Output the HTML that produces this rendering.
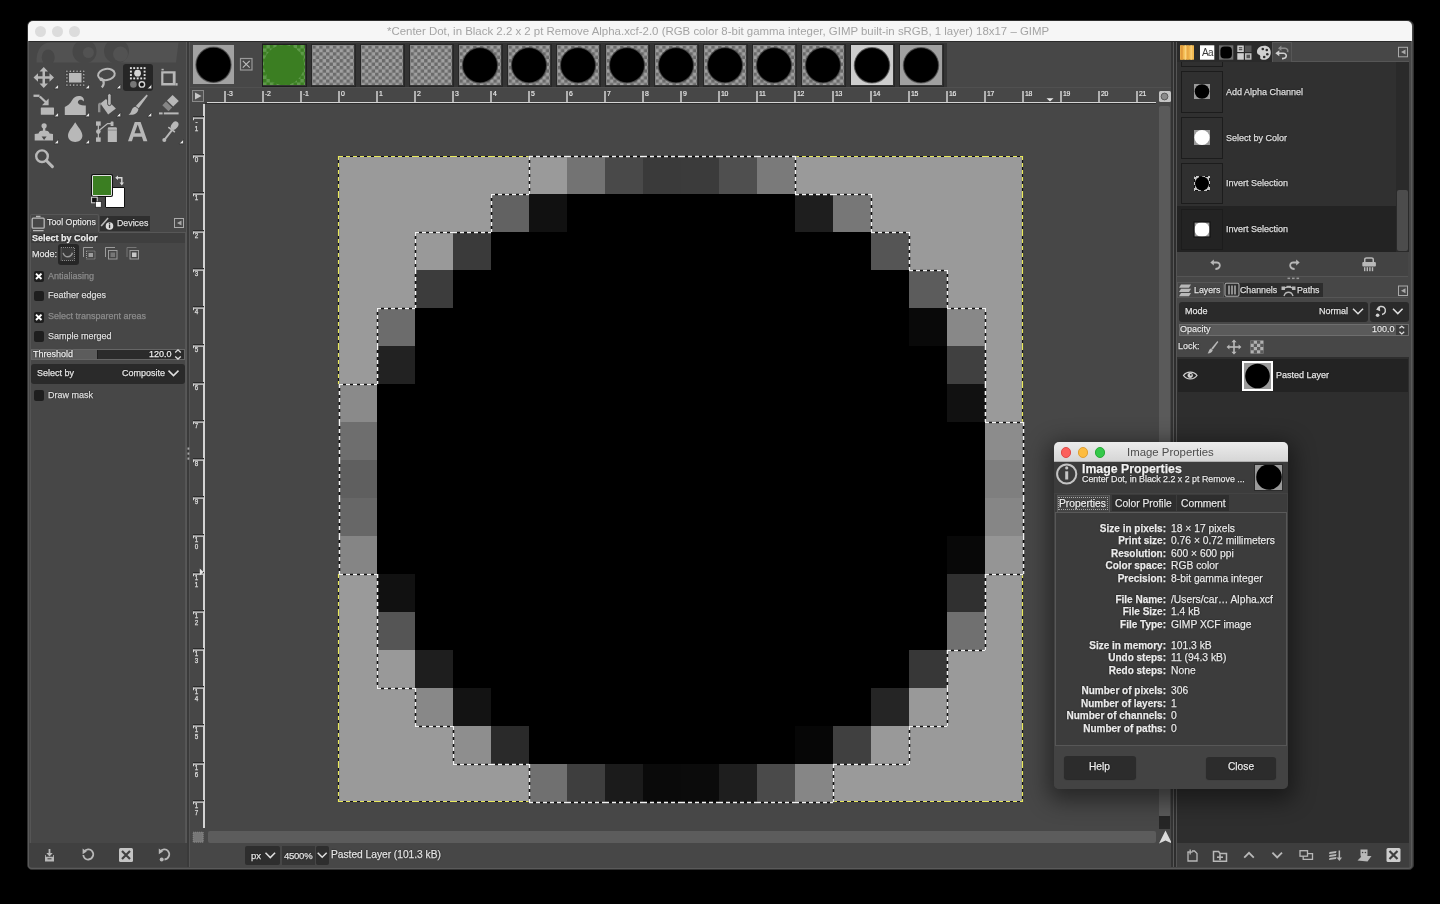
<!DOCTYPE html>
<html><head><meta charset="utf-8"><title>GIMP</title>
<style>
*{box-sizing:border-box;margin:0;padding:0}
html,body{width:1440px;height:904px;overflow:hidden;background:#000;font-family:"Liberation Sans", sans-serif;position:relative}
.a{position:absolute}
.t{position:absolute;white-space:nowrap;line-height:1;color:#e2e2e2;text-shadow:0 0 1px #000,0 0 1.5px rgba(0,0,0,.8);-webkit-text-stroke:0.25px currentColor;will-change:transform}
svg{position:absolute;overflow:visible}
</style></head><body>
<div class="a" style="left:26.5px;top:20px;width:1387px;height:849.5px;background:#474747;border-radius:6px 6px 5px 5px;border:1px solid #303030"></div>
<div class="a" style="left:28px;top:21px;width:1384px;height:20px;background:#f6f6f6;border-radius:5px 5px 0 0"></div>
<div class="a" style="left:28px;top:41px;width:1384px;height:1px;background:#2a2a2a;"></div>
<div class="a" style="left:35.1px;top:25.5px;width:11px;height:11px;background:#dcdcdc;border-radius:50%"></div>
<div class="a" style="left:52.0px;top:25.5px;width:11px;height:11px;background:#dcdcdc;border-radius:50%"></div>
<div class="a" style="left:68.9px;top:25.5px;width:11px;height:11px;background:#dcdcdc;border-radius:50%"></div>
<div class="t" style="left:386.7px;top:26px;font-size:11.45px;color:#a4a4a4;font-weight:400;text-shadow:none;-webkit-text-stroke:0">*Center Dot, in Black 2.2 x 2 pt Remove Alpha.xcf-2.0 (RGB color 8-bit gamma integer, GIMP built-in sRGB, 1 layer) 18x17 – GIMP</div>
<div class="a" style="left:28px;top:42px;width:161px;height:825px;background:#474747;"></div>
<div class="a" style="left:186px;top:42px;width:1px;height:825px;background:#575757;"></div>
<div class="a" style="left:187px;top:42px;width:2px;height:825px;background:#3a3a3a;"></div>
<div class="a" style="left:189px;top:42px;width:1px;height:825px;background:#545454;"></div>
<div class="a" style="left:28px;top:42px;width:160px;height:21px;overflow:hidden">
<svg style="left:-28px;top:-42px;" width="1" height="1" viewBox="0 0 1 1">
<path d="M36.5 62.5 C36 50 42 42.5 50 42.5 L178.5 42.5 L176 62.5 Z" fill="#525252"/>
<ellipse cx="48.2" cy="57.5" rx="6.5" ry="8" fill="#474747"/>
<path d="M52 42 C60 44 66 52 76 62.5 L36 62.5 Z" fill="none"/>
<circle cx="84.5" cy="51.5" r="12" fill="#474747"/>
<circle cx="88.4" cy="52.5" r="5.5" fill="#525252"/>
<circle cx="116.5" cy="51" r="12.5" fill="#474747"/>
<circle cx="120.5" cy="54" r="7.5" fill="#525252"/>
</svg>
</div>
<div class="a" style="left:123px;top:64px;width:30px;height:27px;background:#262626;border-radius:3px"></div>
<svg style="left:0px;top:0px;" width="1" height="1" viewBox="0 0 1 1">
<g fill="#b8b8b8">
 <!-- move -->
 <rect x="42.5" y="70" width="2.5" height="15"/><rect x="36.5" y="76.25" width="15" height="2.5"/>
 <path d="M43.75 67 L48 71.5 L39.5 71.5Z M43.75 88 L48 83.5 L39.5 83.5Z M33.5 77.5 L38 73.25 L38 81.75Z M54 77.5 L49.5 73.25 L49.5 81.75Z"/>
 <!-- rect select -->
 <rect x="69" y="73" width="12.5" height="9.5"/>
</g>
<g fill="#b8b8b8" stroke="#2a2a2a" stroke-width="0.4"><rect x="66.0" y="70.2" width="1.9" height="1.9"/><rect x="66.0" y="84.1" width="1.9" height="1.9"/><rect x="69.3" y="70.2" width="1.9" height="1.9"/><rect x="69.3" y="84.1" width="1.9" height="1.9"/><rect x="72.7" y="70.2" width="1.9" height="1.9"/><rect x="72.7" y="84.1" width="1.9" height="1.9"/><rect x="76.1" y="70.2" width="1.9" height="1.9"/><rect x="76.1" y="84.1" width="1.9" height="1.9"/><rect x="79.4" y="70.2" width="1.9" height="1.9"/><rect x="79.4" y="84.1" width="1.9" height="1.9"/><rect x="82.9" y="70.2" width="1.9" height="1.9"/><rect x="82.9" y="84.1" width="1.9" height="1.9"/><rect x="66.0" y="73.6" width="1.9" height="1.9"/><rect x="82.9" y="73.6" width="1.9" height="1.9"/><rect x="66.0" y="77.0" width="1.9" height="1.9"/><rect x="82.9" y="77.0" width="1.9" height="1.9"/><rect x="66.0" y="80.4" width="1.9" height="1.9"/><rect x="82.9" y="80.4" width="1.9" height="1.9"/></g>
<g fill="#b8b8b8">
 <!-- crop -->
 <path d="M161.2 71.2 H175.6 V85.6 H161.2 Z M163.4 73.4 V83.1 H172.8 V73.4 Z" fill-rule="evenodd"/>
 <rect x="161.5" y="68.8" width="2.2" height="1.6"/><rect x="175.6" y="83.1" width="2" height="2.5"/>
 <!-- fuzzy select -->
</g>
<g fill="#e0e0e0"><rect x="129.95000000000002" y="67.14999999999999" width="1.9" height="1.9"/><rect x="129.95000000000002" y="77.45" width="1.9" height="1.9"/><rect x="133.25" y="67.14999999999999" width="1.9" height="1.9"/><rect x="133.25" y="77.45" width="1.9" height="1.9"/><rect x="136.75" y="67.14999999999999" width="1.9" height="1.9"/><rect x="136.75" y="77.45" width="1.9" height="1.9"/><rect x="140.25" y="67.14999999999999" width="1.9" height="1.9"/><rect x="140.25" y="77.45" width="1.9" height="1.9"/><rect x="143.65" y="67.14999999999999" width="1.9" height="1.9"/><rect x="143.65" y="77.45" width="1.9" height="1.9"/><rect x="129.95000000000002" y="70.64999999999999" width="1.9" height="1.9"/><rect x="129.95000000000002" y="74.05" width="1.9" height="1.9"/><rect x="143.65" y="70.64999999999999" width="1.9" height="1.9"/><rect x="143.65" y="74.05" width="1.9" height="1.9"/></g>
<circle cx="137.6" cy="73.2" r="3.4" fill="#d4d4d4"/>
<circle cx="133.4" cy="84.4" r="3.3" fill="#777"/>
<circle cx="141.9" cy="84.4" r="2.7" fill="#111" stroke="#d4d4d4" stroke-width="1.4"/>
<!-- lasso -->
<g fill="none" stroke="#b8b8b8" stroke-width="2">
 <ellipse cx="106.4" cy="74.5" rx="8.4" ry="5.6" transform="rotate(-8 106.4 74.5)"/>
 <path d="M100.8 78.8 C 102.5 79.5 104 81.5 103.6 84 C 103.3 85.6 102.6 86.6 101.8 87.4" stroke-width="2.3"/>
</g>
<circle cx="101.3" cy="79.4" r="1.8" fill="#b8b8b8"/>
<path d="M58.5 88.8 L58.5 84.3 L54.0 88.8 Z" fill="#e6e6e6" stroke="#1e1e1e" stroke-width="0.6"/><path d="M89.5 88.8 L89.5 84.3 L85.0 88.8 Z" fill="#e6e6e6" stroke="#1e1e1e" stroke-width="0.6"/><path d="M120.7 88.8 L120.7 84.3 L116.2 88.8 Z" fill="#e6e6e6" stroke="#1e1e1e" stroke-width="0.6"/><path d="M151.7 88.8 L151.7 84.3 L147.2 88.8 Z" fill="#e6e6e6" stroke="#1e1e1e" stroke-width="0.6"/>
<g fill="#b8b8b8">
 <!-- transform: dash + arrow + box -->
 <rect x="33.5" y="94.6" width="6" height="2.3"/>
 <path d="M39.8 96.5 L46.2 102.5" stroke="#b8b8b8" stroke-width="2.3"/>
 <path d="M48.6 105.2 L48.6 98.5 L42 105.2 Z"/>
 <rect x="40.8" y="107.4" width="13.2" height="7.4" rx="0.6"/>
 <!-- warp wave -->
 <path d="M64.8 115 L64.8 107 C 67 106 70 104 72.2 100 C 74 96.8 77 95.5 80 96 C 83 96.5 84.5 99 83.8 101.5 C 82.5 99.8 80.6 99.3 79 100.2 C 77.3 101.2 77.6 103.5 79.5 104.5 C 81.5 105.5 84 105.8 85.8 105.5 L85.8 115 Z"/>
 <!-- bucket -->
 <path d="M106 98.9 L115.9 108.4 L108.2 114.4 L100.4 103.6 Z"/>
 <path d="M98 112.3 L98 105 C 98 103.5 99 102.6 100.5 102.6 L 101.6 104.4 C 100.8 104.6 100.4 105.2 100.4 106 L100.4 112.3 Z" fill="#8e8e8e"/>
 <rect x="107.6" y="93.6" width="3.6" height="12" rx="1.8" stroke="#2e2e2e" stroke-width="0.8"/>
 <!-- paintbrush -->
 <path d="M146.7 94.6 L147.8 95.8 L138.6 108.2 L135.8 106 Z"/>
 <path d="M135.6 106.8 L138.4 109 C 138 112.6 135 114.8 131 114.8 C 130 114.8 129 114.6 128.6 114.4 C 130.4 113.6 131 112 131.6 110.2 C 132.4 108 133.8 107 135.6 106.8 Z"/>
 <!-- eraser -->
 <path d="M172.6 95 L178.8 101 L173.2 106.6 L167 100.6 Z"/>
 <path d="M166 101.6 L172.2 107.6 L168.5 111.3 L162.3 105.3 Z" fill="#858585"/>
 <rect x="159" y="112.4" width="3.6" height="2"/><rect x="163.8" y="112.4" width="14.8" height="2"/>
</g>
<path d="M58.5 116.8 L58.5 112.3 L54.0 116.8 Z" fill="#e6e6e6" stroke="#1e1e1e" stroke-width="0.6"/><path d="M89.5 116.8 L89.5 112.3 L85.0 116.8 Z" fill="#e6e6e6" stroke="#1e1e1e" stroke-width="0.6"/><path d="M120.7 116.8 L120.7 112.3 L116.2 116.8 Z" fill="#e6e6e6" stroke="#1e1e1e" stroke-width="0.6"/><path d="M151.7 116.8 L151.7 112.3 L147.2 116.8 Z" fill="#e6e6e6" stroke="#1e1e1e" stroke-width="0.6"/>
<g fill="#b8b8b8">
 <!-- clone stamp -->
 <circle cx="44.1" cy="125.8" r="2.6"/>
 <rect x="42.9" y="127" width="2.4" height="4"/>
 <path d="M38.5 133.5 C 39 131 41 130.4 44 130.4 C 47 130.4 49 131 49.6 133.5 L53 134 L53 140.4 L34.7 140.4 L34.7 134 Z"/>
 <path d="M41.6 136.4 L46.6 136.4 L44.1 140 Z" fill="#474747"/>
 <!-- drop -->
 <path d="M75.2 122.2 C 77.5 126.5 82.4 131 82.4 135.6 C 82.4 139.5 79.2 142 75.2 142 C 71.2 142 68 139.5 68 135.6 C 68 131 73 126.5 75.2 122.2 Z"/>
 <!-- paths + bottle -->
 <rect x="96" y="121.4" width="4.7" height="4.3"/><rect x="96" y="137.4" width="4.7" height="4.4"/>
 <circle cx="98.35" cy="131.6" r="2.3"/>
 <rect x="97.75" y="125" width="1.2" height="13"/>
 <path d="M99.6 130 L107.6 123.6 L111.5 123.6" fill="none" stroke="#b8b8b8" stroke-width="1.3"/>
 <rect x="110.6" y="121.4" width="2.9" height="4.6" rx="0.6"/>
 <path d="M107.8 128.4 C 107.8 127.6 108.4 127.2 109.2 127.2 H115.5 C 116.3 127.2 116.9 127.6 116.9 128.4 V142 H107.8 Z"/>
 <rect x="107.8" y="129.6" width="9.1" height="1" fill="#8a8a8a"/>
 <!-- A -->
 <path d="M134.8 122 L140.6 122 L147.4 141.3 L143.4 141.3 L141.9 136.8 L133.4 136.8 L131.9 141.3 L128 141.3 Z M134.5 133.2 L140.8 133.2 L137.7 124.6 Z" fill-rule="evenodd"/>
 <!-- colour picker -->
 <ellipse cx="174.6" cy="125.6" rx="3.2" ry="4.6" transform="rotate(38 174.6 125.6)"/>
 <path d="M168.9 127.6 L174.3 131.6" stroke="#b8b8b8" stroke-width="1.8" stroke-linecap="round"/>
 <path d="M172.4 129.6 L164.8 139.4" stroke="#b8b8b8" stroke-width="1.9"/>
 <circle cx="164.3" cy="140" r="2"/>
</g>
<path d="M58.5 143.8 L58.5 139.3 L54.0 143.8 Z" fill="#e6e6e6" stroke="#1e1e1e" stroke-width="0.6"/><path d="M89.5 143.8 L89.5 139.3 L85.0 143.8 Z" fill="#e6e6e6" stroke="#1e1e1e" stroke-width="0.6"/><path d="M183.5 143.8 L183.5 139.3 L179.0 143.8 Z" fill="#e6e6e6" stroke="#1e1e1e" stroke-width="0.6"/>
<g fill="none" stroke="#b8b8b8" stroke-width="2.4">
 <circle cx="42" cy="156.2" r="5.8"/>
 <path d="M46.3 160.5 L52.4 166.6" stroke-width="3" stroke-linecap="round"/>
</g>
</svg>
<div class="a" style="left:104.5px;top:187px;width:20px;height:21px;background:#ffffff;border:1px solid #111;border-radius:1px"></div>
<div class="a" style="left:91.5px;top:175px;width:20px;height:21px;background:#3b7e22;border:1.5px solid #e0e0e0;box-shadow:0 0 0 1px #111;border-radius:1px"></div>
<svg style="left:0px;top:0px;" width="1" height="1" viewBox="0 0 1 1">
<g fill="none" stroke="#dadada" stroke-width="1.4">
 <path d="M117 177.8 L121.8 177.8 L121.8 183"/>
</g>
<path d="M115.2 177.8 L118 175.6 L118 180 Z M121.8 185.6 L119.6 182.6 L124 182.6 Z" fill="#dadada"/>
<rect x="91.6" y="197.2" width="5.6" height="5.6" fill="#111" stroke="#ddd" stroke-width="1"/>
<rect x="95.6" y="201.6" width="5.6" height="5.6" fill="#fff" stroke="#111" stroke-width="0.6"/>
</svg>
<div class="a" style="left:30px;top:214px;width:69px;height:18px;background:#474747;border:1px solid #575757;border-bottom:none;border-radius:2px 2px 0 0"></div>
<div class="a" style="left:99.5px;top:216px;width:50px;height:15px;background:#2f2f2f;"></div>
<div class="a" style="left:99px;top:231.5px;width:87px;height:1px;background:#575757;"></div>
<svg style="left:0px;top:0px;" width="1" height="1" viewBox="0 0 1 1">
<g fill="none" stroke="#b8b8b8" stroke-width="1.3">
 <rect x="32.2" y="218.2" width="12" height="10" rx="1"/>
 <path d="M33 230.6 L43.6 230.6 M36 216.5 L40.5 216.5"/>
</g>
<path d="M100.5 225.5 L107.5 217.5 L108.6 218.4 L101.8 226.4 Z" fill="#b8b8b8"/>
<circle cx="109.5" cy="226" r="3.8" fill="#dcdcdc"/>
<rect x="108.9" y="224.5" width="1.3" height="3.6" fill="#2f2f2f"/><rect x="108.9" y="222.8" width="1.3" height="1" fill="#2f2f2f"/>
<rect x="174.5" y="218.5" width="9" height="9" fill="none" stroke="#aaa" stroke-width="1"/>
<path d="M181.5 220.5 L177 223 L181.5 225.5 Z" fill="#aaa"/>
</svg>
<div class="t" style="left:46.5px;top:218px;font-size:8.8px;color:#e8e8e8;font-weight:400;">Tool Options</div>
<div class="t" style="left:116.5px;top:218.5px;font-size:8.8px;color:#e0e0e0;font-weight:400;">Devices</div>
<div class="a" style="left:30px;top:233px;width:156px;height:610px;background:#474747;border-left:1px solid #555;border-right:1px solid #555"></div>
<div class="a" style="left:31px;top:233px;width:154px;height:10px;background:#3f3f3f;"></div>
<div class="t" style="left:31.5px;top:233.8px;font-size:9px;color:#f0f0f0;font-weight:700;">Select by Color</div>
<div class="t" style="left:31.5px;top:249.5px;font-size:9px;color:#e8e8e8;font-weight:400;">Mode:</div>
<div class="a" style="left:58px;top:244px;width:20.5px;height:20.5px;background:#262626;border-radius:3px"></div>
<svg style="left:0px;top:0px;" width="1" height="1" viewBox="0 0 1 1">
<rect x="61" y="247.5" width="13.5" height="13" fill="#3a3a3a" stroke="#8a8a8a" stroke-width="1" stroke-dasharray="1 1"/>
<path d="M63.2 252.8 C 64.5 258 71 258 72.4 252.8" fill="none" stroke="#9a9a9a" stroke-width="1.4"/>
<g fill="none" stroke="#9c9c9c" stroke-width="1">
 <path d="M83.5 257 L83.5 247.5 L93 247.5"/>
 <rect x="86.5" y="251" width="8.5" height="8" stroke-dasharray="1 1"/>
 <path d="M105.5 257 L105.5 247.5 L115 247.5"/>
 <rect x="108.5" y="250.5" width="8.5" height="8.5"/>
 <path d="M127 257 L127 247.5 L136.5 247.5" stroke="#777"/>
 <rect x="130" y="250.5" width="8.5" height="8.5"/>
</g>
<rect x="88.5" y="253" width="4.5" height="4" fill="#9c9c9c"/>
<rect x="110.5" y="252.5" width="4.5" height="4.5" fill="#777"/>
<rect x="132" y="252.5" width="4.5" height="4.5" fill="#c8c8c8"/>
</svg>
<div class="a" style="left:33.5px;top:271px;width:10.5px;height:10.5px;background:#1e1e1e;border-radius:2px"></div>
<svg style="left:0px;top:0px;" width="1" height="1" viewBox="0 0 1 1"><path d="M36 273.6 L41.5 279 M41.5 273.6 L36 279" stroke="#fff" stroke-width="2"/></svg>
<div class="t" style="left:48px;top:271.5px;font-size:9px;color:#8c8c8c;font-weight:400;text-shadow:none">Antialiasing</div>
<div class="a" style="left:33.5px;top:290.5px;width:10.5px;height:10.5px;background:#1e1e1e;border-radius:2px"></div>
<div class="t" style="left:48px;top:291px;font-size:9px;color:#e0e0e0;font-weight:400;">Feather edges</div>
<div class="a" style="left:33.5px;top:312px;width:10.5px;height:10.5px;background:#1e1e1e;border-radius:2px"></div>
<svg style="left:0px;top:0px;" width="1" height="1" viewBox="0 0 1 1"><path d="M36 314.6 L41.5 320 M41.5 314.6 L36 320" stroke="#fff" stroke-width="2"/></svg>
<div class="t" style="left:48px;top:312px;font-size:9px;color:#8c8c8c;font-weight:400;text-shadow:none">Select transparent areas</div>
<div class="a" style="left:33.5px;top:331.3px;width:10.5px;height:10.5px;background:#1e1e1e;border-radius:2px"></div>
<div class="t" style="left:48px;top:331.5px;font-size:9px;color:#e0e0e0;font-weight:400;">Sample merged</div>
<div class="a" style="left:31px;top:348.5px;width:154px;height:11.5px;background:#2b2b2b;border:1px solid #666"></div>
<div class="a" style="left:32px;top:349.5px;width:65.5px;height:9.5px;background:#5c5c5c;"></div>
<div class="a" style="left:97.3px;top:349.5px;width:1px;height:9.5px;background:#1e1e1e;"></div>
<div class="t" style="left:32.5px;top:349.8px;font-size:9px;color:#f0f0f0;font-weight:400;">Threshold</div>
<div class="t" style="left:148.5px;top:349.8px;font-size:9px;color:#f0f0f0;font-weight:400;">120.0</div>
<svg style="left:0px;top:0px;" width="1" height="1" viewBox="0 0 1 1"><path d="M175.2 352.4 L178 349.8 L180.8 352.4 M175.2 356.4 L178 359 L180.8 356.4" fill="none" stroke="#ddd" stroke-width="1.3"/></svg>
<div class="a" style="left:31px;top:363.5px;width:154px;height:20px;background:#2a2a2a;border-radius:3px"></div>
<div class="t" style="left:37px;top:368.5px;font-size:9px;color:#e6e6e6;font-weight:400;">Select by</div>
<div class="t" style="left:121.5px;top:368.5px;font-size:9px;color:#e6e6e6;font-weight:400;">Composite</div>
<svg style="left:0px;top:0px;" width="1" height="1" viewBox="0 0 1 1"><path d="M168.5 370.6 L173.5 375.6 L178.5 370.6" fill="none" stroke="#e0e0e0" stroke-width="1.5"/></svg>
<div class="a" style="left:33.5px;top:390.2px;width:10.5px;height:10.5px;background:#1e1e1e;border-radius:2px"></div>
<div class="t" style="left:48px;top:390.5px;font-size:9px;color:#e0e0e0;font-weight:400;">Draw mask</div>
<div class="a" style="left:29px;top:843px;width:158px;height:24px;background:#404040;"></div>
<svg style="left:0px;top:0px;" width="1" height="1" viewBox="0 0 1 1">
<g fill="#b8b8b8">
 <rect x="48.6" y="849" width="1.8" height="5"/><path d="M46.3 853 L52.7 853 L49.5 856.5 Z"/>
 <path d="M45 855 L45.8 855 L45.8 856.8 L53.2 856.8 L53.2 855 L54 855 L54 861.6 L45 861.6 Z"/>
</g>
<rect x="47.5" y="858.3" width="4" height="1" fill="#404040"/>
<g fill="none" stroke="#b8b8b8" stroke-width="1.8">
 <path d="M84.5 851.5 C 86 849 90 848.5 92 851 C 94.5 854 93 859 88.5 859.5 C 85.5 859.8 83.5 857.5 83.3 855"/>
 <path d="M160.6 851.5 C 162 849 166 848.5 168 851 C 170.5 854 169 859 164.5 859.5"/>
</g>
<path d="M82.6 848.6 L86.8 851.6 L82.6 854.2 Z" fill="#b8b8b8"/>
<path d="M158.8 848.6 L163 851.6 L158.8 854.2 Z" fill="#b8b8b8"/>
<circle cx="161.7" cy="859.6" r="2" fill="#b8b8b8"/>
<rect x="119" y="848" width="14" height="14" rx="1.5" fill="#c4c4c4"/>
<path d="M122 851 L130 859 M130 851 L122 859" stroke="#404040" stroke-width="2.2"/>
</svg>
<div class="a" style="left:190px;top:42px;width:986px;height:825px;background:#474747;"></div>
<div class="a" style="left:262px;top:43px;width:685px;height:44px;background:#343434;"></div>
<svg width="0" height="0" style="position:absolute"><defs><pattern id="chk" width="6.8" height="6.8" patternUnits="userSpaceOnUse" x="0.5" y="0.5"><rect width="6.8" height="6.8" fill="#a0a0a0"/><rect width="3.4" height="3.4" fill="#6a6a6a"/><rect x="3.4" y="3.4" width="3.4" height="3.4" fill="#6a6a6a"/></pattern><pattern id="chkg" width="6.8" height="6.8" patternUnits="userSpaceOnUse"><rect width="6.8" height="6.8" fill="#5f9a4b"/><rect width="3.4" height="3.4" fill="#3b7e22"/><rect x="3.4" y="3.4" width="3.4" height="3.4" fill="#3b7e22"/></pattern></defs></svg>
<svg style="left:193px;top:45px" width="41" height="39"><rect width="41" height="39" fill="#a2a2a2"/><circle cx="20.5" cy="19.8" r="17.6" fill="#000" stroke="#4a4a4a" stroke-width="1.3" stroke-opacity="0.7"/></svg>
<svg style="left:0px;top:0px;" width="1" height="1" viewBox="0 0 1 1"><rect x="240.5" y="58.5" width="11.5" height="11.5" fill="none" stroke="#9a9a9a" stroke-width="1.2"/><path d="M242.8 60.8 L249.7 67.7 M249.7 60.8 L242.8 67.7" stroke="#bcbcbc" stroke-width="1.2"/></svg>
<svg style="left:263px;top:45px" width="42" height="40"><rect width="42" height="40" fill="url(#chkg)"/><circle cx="21" cy="20" r="20" fill="#3b7e22"/></svg>
<div class="a" style="left:261.5px;top:43.5px;width:45px;height:43px;background:transparent;border:1.5px solid #1e1e1e"></div>
<svg style="left:312px;top:45px" width="42" height="40"><rect width="42" height="40" fill="url(#chk)"/></svg>
<div class="a" style="left:310.5px;top:43.5px;width:45px;height:43px;background:transparent;border:1.5px solid #262626"></div>
<svg style="left:361px;top:45px" width="42" height="40"><rect width="42" height="40" fill="url(#chk)"/></svg>
<div class="a" style="left:359.5px;top:43.5px;width:45px;height:43px;background:transparent;border:1.5px solid #262626"></div>
<svg style="left:410px;top:45px" width="42" height="40"><rect width="42" height="40" fill="url(#chk)"/></svg>
<div class="a" style="left:408.5px;top:43.5px;width:45px;height:43px;background:transparent;border:1.5px solid #262626"></div>
<svg style="left:459px;top:45px" width="42" height="40"><rect width="42" height="40" fill="url(#chk)"/><circle cx="21" cy="20.3" r="17.6" fill="#000" stroke="#4a4a4a" stroke-width="1.3" stroke-opacity="0.7"/></svg>
<div class="a" style="left:457.5px;top:43.5px;width:45px;height:43px;background:transparent;border:1.5px solid #262626"></div>
<svg style="left:508px;top:45px" width="42" height="40"><rect width="42" height="40" fill="url(#chk)"/><circle cx="21" cy="20.3" r="17.6" fill="#000" stroke="#4a4a4a" stroke-width="1.3" stroke-opacity="0.7"/></svg>
<div class="a" style="left:506.5px;top:43.5px;width:45px;height:43px;background:transparent;border:1.5px solid #262626"></div>
<svg style="left:557px;top:45px" width="42" height="40"><rect width="42" height="40" fill="url(#chk)"/><circle cx="21" cy="20.3" r="17.6" fill="#000" stroke="#4a4a4a" stroke-width="1.3" stroke-opacity="0.7"/></svg>
<div class="a" style="left:555.5px;top:43.5px;width:45px;height:43px;background:transparent;border:1.5px solid #262626"></div>
<svg style="left:606px;top:45px" width="42" height="40"><rect width="42" height="40" fill="url(#chk)"/><circle cx="21" cy="20.3" r="17.6" fill="#000" stroke="#4a4a4a" stroke-width="1.3" stroke-opacity="0.7"/></svg>
<div class="a" style="left:604.5px;top:43.5px;width:45px;height:43px;background:transparent;border:1.5px solid #262626"></div>
<svg style="left:655px;top:45px" width="42" height="40"><rect width="42" height="40" fill="url(#chk)"/><circle cx="21" cy="20.3" r="17.6" fill="#000" stroke="#4a4a4a" stroke-width="1.3" stroke-opacity="0.7"/></svg>
<div class="a" style="left:653.5px;top:43.5px;width:45px;height:43px;background:transparent;border:1.5px solid #262626"></div>
<svg style="left:704px;top:45px" width="42" height="40"><rect width="42" height="40" fill="url(#chk)"/><circle cx="21" cy="20.3" r="17.6" fill="#000" stroke="#4a4a4a" stroke-width="1.3" stroke-opacity="0.7"/></svg>
<div class="a" style="left:702.5px;top:43.5px;width:45px;height:43px;background:transparent;border:1.5px solid #262626"></div>
<svg style="left:753px;top:45px" width="42" height="40"><rect width="42" height="40" fill="url(#chk)"/><circle cx="21" cy="20.3" r="17.6" fill="#000" stroke="#4a4a4a" stroke-width="1.3" stroke-opacity="0.7"/></svg>
<div class="a" style="left:751.5px;top:43.5px;width:45px;height:43px;background:transparent;border:1.5px solid #262626"></div>
<svg style="left:802px;top:45px" width="42" height="40"><rect width="42" height="40" fill="url(#chk)"/><circle cx="21" cy="20.3" r="17.6" fill="#000" stroke="#4a4a4a" stroke-width="1.3" stroke-opacity="0.7"/></svg>
<div class="a" style="left:800.5px;top:43.5px;width:45px;height:43px;background:transparent;border:1.5px solid #262626"></div>
<svg style="left:851px;top:45px" width="42" height="40"><rect width="42" height="40" fill="#cdcdcd"/><circle cx="21" cy="20.3" r="17.6" fill="#000" stroke="#4a4a4a" stroke-width="1.3" stroke-opacity="0.7"/></svg>
<div class="a" style="left:849.5px;top:43.5px;width:45px;height:43px;background:transparent;border:1.5px solid #262626"></div>
<svg style="left:900px;top:45px" width="42" height="40"><rect width="42" height="40" fill="#a0a0a0"/><circle cx="21" cy="20.3" r="17.6" fill="#000" stroke="#4a4a4a" stroke-width="1.3" stroke-opacity="0.7"/></svg>
<div class="a" style="left:898.5px;top:43.5px;width:45px;height:43px;background:transparent;border:1.5px solid #262626"></div>
<div class="a" style="left:190px;top:87px;width:986px;height:1px;background:#505050;"></div>
<div class="a" style="left:207px;top:101.5px;width:949px;height:1.5px;background:#d4d4d4;"></div>
<div class="a" style="left:205px;top:103px;width:951px;height:1px;background:#2c2c2c;"></div>
<svg style="left:0px;top:0px;" width="1" height="1" viewBox="0 0 1 1"><rect x="224.25" y="91" width="1.5" height="11" fill="#d4d4d4"/><rect x="262.25" y="91" width="1.5" height="11" fill="#d4d4d4"/><rect x="300.25" y="91" width="1.5" height="11" fill="#d4d4d4"/><rect x="338.25" y="91" width="1.5" height="11" fill="#d4d4d4"/><rect x="376.25" y="91" width="1.5" height="11" fill="#d4d4d4"/><rect x="414.25" y="91" width="1.5" height="11" fill="#d4d4d4"/><rect x="452.25" y="91" width="1.5" height="11" fill="#d4d4d4"/><rect x="490.25" y="91" width="1.5" height="11" fill="#d4d4d4"/><rect x="528.25" y="91" width="1.5" height="11" fill="#d4d4d4"/><rect x="566.25" y="91" width="1.5" height="11" fill="#d4d4d4"/><rect x="604.25" y="91" width="1.5" height="11" fill="#d4d4d4"/><rect x="642.25" y="91" width="1.5" height="11" fill="#d4d4d4"/><rect x="680.25" y="91" width="1.5" height="11" fill="#d4d4d4"/><rect x="718.25" y="91" width="1.5" height="11" fill="#d4d4d4"/><rect x="756.25" y="91" width="1.5" height="11" fill="#d4d4d4"/><rect x="794.25" y="91" width="1.5" height="11" fill="#d4d4d4"/><rect x="832.25" y="91" width="1.5" height="11" fill="#d4d4d4"/><rect x="870.25" y="91" width="1.5" height="11" fill="#d4d4d4"/><rect x="908.25" y="91" width="1.5" height="11" fill="#d4d4d4"/><rect x="946.25" y="91" width="1.5" height="11" fill="#d4d4d4"/><rect x="984.25" y="91" width="1.5" height="11" fill="#d4d4d4"/><rect x="1022.25" y="91" width="1.5" height="11" fill="#d4d4d4"/><rect x="1060.25" y="91" width="1.5" height="11" fill="#d4d4d4"/><rect x="1098.25" y="91" width="1.5" height="11" fill="#d4d4d4"/><rect x="1136.25" y="91" width="1.5" height="11" fill="#d4d4d4"/></svg>
<div class="t" style="left:226.8px;top:90.6px;font-size:6.9px;color:#ececec;font-weight:400;text-shadow:none;letter-spacing:-0.3px;-webkit-text-stroke:0.15px #ececec">-3</div>
<div class="t" style="left:264.8px;top:90.6px;font-size:6.9px;color:#ececec;font-weight:400;text-shadow:none;letter-spacing:-0.3px;-webkit-text-stroke:0.15px #ececec">-2</div>
<div class="t" style="left:302.8px;top:90.6px;font-size:6.9px;color:#ececec;font-weight:400;text-shadow:none;letter-spacing:-0.3px;-webkit-text-stroke:0.15px #ececec">-1</div>
<div class="t" style="left:340.8px;top:90.6px;font-size:6.9px;color:#ececec;font-weight:400;text-shadow:none;letter-spacing:-0.3px;-webkit-text-stroke:0.15px #ececec">0</div>
<div class="t" style="left:378.8px;top:90.6px;font-size:6.9px;color:#ececec;font-weight:400;text-shadow:none;letter-spacing:-0.3px;-webkit-text-stroke:0.15px #ececec">1</div>
<div class="t" style="left:416.8px;top:90.6px;font-size:6.9px;color:#ececec;font-weight:400;text-shadow:none;letter-spacing:-0.3px;-webkit-text-stroke:0.15px #ececec">2</div>
<div class="t" style="left:454.8px;top:90.6px;font-size:6.9px;color:#ececec;font-weight:400;text-shadow:none;letter-spacing:-0.3px;-webkit-text-stroke:0.15px #ececec">3</div>
<div class="t" style="left:492.8px;top:90.6px;font-size:6.9px;color:#ececec;font-weight:400;text-shadow:none;letter-spacing:-0.3px;-webkit-text-stroke:0.15px #ececec">4</div>
<div class="t" style="left:530.8px;top:90.6px;font-size:6.9px;color:#ececec;font-weight:400;text-shadow:none;letter-spacing:-0.3px;-webkit-text-stroke:0.15px #ececec">5</div>
<div class="t" style="left:568.8px;top:90.6px;font-size:6.9px;color:#ececec;font-weight:400;text-shadow:none;letter-spacing:-0.3px;-webkit-text-stroke:0.15px #ececec">6</div>
<div class="t" style="left:606.8px;top:90.6px;font-size:6.9px;color:#ececec;font-weight:400;text-shadow:none;letter-spacing:-0.3px;-webkit-text-stroke:0.15px #ececec">7</div>
<div class="t" style="left:644.8px;top:90.6px;font-size:6.9px;color:#ececec;font-weight:400;text-shadow:none;letter-spacing:-0.3px;-webkit-text-stroke:0.15px #ececec">8</div>
<div class="t" style="left:682.8px;top:90.6px;font-size:6.9px;color:#ececec;font-weight:400;text-shadow:none;letter-spacing:-0.3px;-webkit-text-stroke:0.15px #ececec">9</div>
<div class="t" style="left:720.8px;top:90.6px;font-size:6.9px;color:#ececec;font-weight:400;text-shadow:none;letter-spacing:-0.3px;-webkit-text-stroke:0.15px #ececec">10</div>
<div class="t" style="left:758.8px;top:90.6px;font-size:6.9px;color:#ececec;font-weight:400;text-shadow:none;letter-spacing:-0.3px;-webkit-text-stroke:0.15px #ececec">11</div>
<div class="t" style="left:796.8px;top:90.6px;font-size:6.9px;color:#ececec;font-weight:400;text-shadow:none;letter-spacing:-0.3px;-webkit-text-stroke:0.15px #ececec">12</div>
<div class="t" style="left:834.8px;top:90.6px;font-size:6.9px;color:#ececec;font-weight:400;text-shadow:none;letter-spacing:-0.3px;-webkit-text-stroke:0.15px #ececec">13</div>
<div class="t" style="left:872.8px;top:90.6px;font-size:6.9px;color:#ececec;font-weight:400;text-shadow:none;letter-spacing:-0.3px;-webkit-text-stroke:0.15px #ececec">14</div>
<div class="t" style="left:910.8px;top:90.6px;font-size:6.9px;color:#ececec;font-weight:400;text-shadow:none;letter-spacing:-0.3px;-webkit-text-stroke:0.15px #ececec">15</div>
<div class="t" style="left:948.8px;top:90.6px;font-size:6.9px;color:#ececec;font-weight:400;text-shadow:none;letter-spacing:-0.3px;-webkit-text-stroke:0.15px #ececec">16</div>
<div class="t" style="left:986.8px;top:90.6px;font-size:6.9px;color:#ececec;font-weight:400;text-shadow:none;letter-spacing:-0.3px;-webkit-text-stroke:0.15px #ececec">17</div>
<div class="t" style="left:1024.8px;top:90.6px;font-size:6.9px;color:#ececec;font-weight:400;text-shadow:none;letter-spacing:-0.3px;-webkit-text-stroke:0.15px #ececec">18</div>
<div class="t" style="left:1062.8px;top:90.6px;font-size:6.9px;color:#ececec;font-weight:400;text-shadow:none;letter-spacing:-0.3px;-webkit-text-stroke:0.15px #ececec">19</div>
<div class="t" style="left:1100.8px;top:90.6px;font-size:6.9px;color:#ececec;font-weight:400;text-shadow:none;letter-spacing:-0.3px;-webkit-text-stroke:0.15px #ececec">20</div>
<div class="t" style="left:1138.8px;top:90.6px;font-size:6.9px;color:#ececec;font-weight:400;text-shadow:none;letter-spacing:-0.3px;-webkit-text-stroke:0.15px #ececec">21</div>
<svg style="left:0px;top:0px;" width="1" height="1" viewBox="0 0 1 1"><path d="M1046.5 98.2 L1053.5 98.2 L1050 101.6 Z" fill="#e8e8e8"/></svg>
<svg style="left:0px;top:0px;" width="1" height="1" viewBox="0 0 1 1"><rect x="192.5" y="90.5" width="11" height="11" fill="#525252" stroke="#8a8a8a" stroke-width="1"/><path d="M195 92.5 L201.5 96 L195 99.5 Z" fill="#c8c8c8"/></svg>
<div class="a" style="left:203px;top:104px;width:1.5px;height:724px;background:#d4d4d4;"></div>
<svg style="left:0px;top:0px;" width="1" height="1" viewBox="0 0 1 1"><rect x="193" y="117.25" width="11" height="1.5" fill="#d4d4d4"/><rect x="193" y="117.25" width="1" height="3" fill="#d4d4d4"/><rect x="193" y="116" width="11" height="1.25" fill="#2a2a2a"/><rect x="193" y="155.25" width="11" height="1.5" fill="#d4d4d4"/><rect x="193" y="155.25" width="1" height="3" fill="#d4d4d4"/><rect x="193" y="154" width="11" height="1.25" fill="#2a2a2a"/><rect x="193" y="193.25" width="11" height="1.5" fill="#d4d4d4"/><rect x="193" y="193.25" width="1" height="3" fill="#d4d4d4"/><rect x="193" y="192" width="11" height="1.25" fill="#2a2a2a"/><rect x="193" y="231.25" width="11" height="1.5" fill="#d4d4d4"/><rect x="193" y="231.25" width="1" height="3" fill="#d4d4d4"/><rect x="193" y="230" width="11" height="1.25" fill="#2a2a2a"/><rect x="193" y="269.25" width="11" height="1.5" fill="#d4d4d4"/><rect x="193" y="269.25" width="1" height="3" fill="#d4d4d4"/><rect x="193" y="268" width="11" height="1.25" fill="#2a2a2a"/><rect x="193" y="307.25" width="11" height="1.5" fill="#d4d4d4"/><rect x="193" y="307.25" width="1" height="3" fill="#d4d4d4"/><rect x="193" y="306" width="11" height="1.25" fill="#2a2a2a"/><rect x="193" y="345.25" width="11" height="1.5" fill="#d4d4d4"/><rect x="193" y="345.25" width="1" height="3" fill="#d4d4d4"/><rect x="193" y="344" width="11" height="1.25" fill="#2a2a2a"/><rect x="193" y="383.25" width="11" height="1.5" fill="#d4d4d4"/><rect x="193" y="383.25" width="1" height="3" fill="#d4d4d4"/><rect x="193" y="382" width="11" height="1.25" fill="#2a2a2a"/><rect x="193" y="421.25" width="11" height="1.5" fill="#d4d4d4"/><rect x="193" y="421.25" width="1" height="3" fill="#d4d4d4"/><rect x="193" y="420" width="11" height="1.25" fill="#2a2a2a"/><rect x="193" y="459.25" width="11" height="1.5" fill="#d4d4d4"/><rect x="193" y="459.25" width="1" height="3" fill="#d4d4d4"/><rect x="193" y="458" width="11" height="1.25" fill="#2a2a2a"/><rect x="193" y="497.25" width="11" height="1.5" fill="#d4d4d4"/><rect x="193" y="497.25" width="1" height="3" fill="#d4d4d4"/><rect x="193" y="496" width="11" height="1.25" fill="#2a2a2a"/><rect x="193" y="535.25" width="11" height="1.5" fill="#d4d4d4"/><rect x="193" y="535.25" width="1" height="3" fill="#d4d4d4"/><rect x="193" y="534" width="11" height="1.25" fill="#2a2a2a"/><rect x="193" y="573.25" width="11" height="1.5" fill="#d4d4d4"/><rect x="193" y="573.25" width="1" height="3" fill="#d4d4d4"/><rect x="193" y="572" width="11" height="1.25" fill="#2a2a2a"/><rect x="193" y="611.25" width="11" height="1.5" fill="#d4d4d4"/><rect x="193" y="611.25" width="1" height="3" fill="#d4d4d4"/><rect x="193" y="610" width="11" height="1.25" fill="#2a2a2a"/><rect x="193" y="649.25" width="11" height="1.5" fill="#d4d4d4"/><rect x="193" y="649.25" width="1" height="3" fill="#d4d4d4"/><rect x="193" y="648" width="11" height="1.25" fill="#2a2a2a"/><rect x="193" y="687.25" width="11" height="1.5" fill="#d4d4d4"/><rect x="193" y="687.25" width="1" height="3" fill="#d4d4d4"/><rect x="193" y="686" width="11" height="1.25" fill="#2a2a2a"/><rect x="193" y="725.25" width="11" height="1.5" fill="#d4d4d4"/><rect x="193" y="725.25" width="1" height="3" fill="#d4d4d4"/><rect x="193" y="724" width="11" height="1.25" fill="#2a2a2a"/><rect x="193" y="763.25" width="11" height="1.5" fill="#d4d4d4"/><rect x="193" y="763.25" width="1" height="3" fill="#d4d4d4"/><rect x="193" y="762" width="11" height="1.25" fill="#2a2a2a"/><rect x="193" y="801.25" width="11" height="1.5" fill="#d4d4d4"/><rect x="193" y="801.25" width="1" height="3" fill="#d4d4d4"/><rect x="193" y="800" width="11" height="1.25" fill="#2a2a2a"/></svg>
<div class="t" style="left:193.5px;top:118.3px;font-size:6.3px;line-height:7px;color:#dedede;text-shadow:none;text-align:center;width:5px">-<br>1</div>
<div class="t" style="left:193.5px;top:156.3px;font-size:6.3px;line-height:7px;color:#dedede;text-shadow:none;text-align:center;width:5px">0</div>
<div class="t" style="left:193.5px;top:194.3px;font-size:6.3px;line-height:7px;color:#dedede;text-shadow:none;text-align:center;width:5px">1</div>
<div class="t" style="left:193.5px;top:232.3px;font-size:6.3px;line-height:7px;color:#dedede;text-shadow:none;text-align:center;width:5px">2</div>
<div class="t" style="left:193.5px;top:270.3px;font-size:6.3px;line-height:7px;color:#dedede;text-shadow:none;text-align:center;width:5px">3</div>
<div class="t" style="left:193.5px;top:308.3px;font-size:6.3px;line-height:7px;color:#dedede;text-shadow:none;text-align:center;width:5px">4</div>
<div class="t" style="left:193.5px;top:346.3px;font-size:6.3px;line-height:7px;color:#dedede;text-shadow:none;text-align:center;width:5px">5</div>
<div class="t" style="left:193.5px;top:384.3px;font-size:6.3px;line-height:7px;color:#dedede;text-shadow:none;text-align:center;width:5px">6</div>
<div class="t" style="left:193.5px;top:422.3px;font-size:6.3px;line-height:7px;color:#dedede;text-shadow:none;text-align:center;width:5px">7</div>
<div class="t" style="left:193.5px;top:460.3px;font-size:6.3px;line-height:7px;color:#dedede;text-shadow:none;text-align:center;width:5px">8</div>
<div class="t" style="left:193.5px;top:498.3px;font-size:6.3px;line-height:7px;color:#dedede;text-shadow:none;text-align:center;width:5px">9</div>
<div class="t" style="left:193.5px;top:536.3px;font-size:6.3px;line-height:7px;color:#dedede;text-shadow:none;text-align:center;width:5px">1<br>0</div>
<div class="t" style="left:193.5px;top:574.3px;font-size:6.3px;line-height:7px;color:#dedede;text-shadow:none;text-align:center;width:5px">1<br>1</div>
<div class="t" style="left:193.5px;top:612.3px;font-size:6.3px;line-height:7px;color:#dedede;text-shadow:none;text-align:center;width:5px">1<br>2</div>
<div class="t" style="left:193.5px;top:650.3px;font-size:6.3px;line-height:7px;color:#dedede;text-shadow:none;text-align:center;width:5px">1<br>3</div>
<div class="t" style="left:193.5px;top:688.3px;font-size:6.3px;line-height:7px;color:#dedede;text-shadow:none;text-align:center;width:5px">1<br>4</div>
<div class="t" style="left:193.5px;top:726.3px;font-size:6.3px;line-height:7px;color:#dedede;text-shadow:none;text-align:center;width:5px">1<br>5</div>
<div class="t" style="left:193.5px;top:764.3px;font-size:6.3px;line-height:7px;color:#dedede;text-shadow:none;text-align:center;width:5px">1<br>6</div>
<div class="t" style="left:193.5px;top:802.3px;font-size:6.3px;line-height:7px;color:#dedede;text-shadow:none;text-align:center;width:5px">1<br>7</div>
<svg style="left:0px;top:0px;" width="1" height="1" viewBox="0 0 1 1"><path d="M199.8 568.5 L203.5 572 L199.8 575.5 Z" fill="#e8e8e8"/></svg>
<svg style="left:0px;top:0px;" width="1" height="1" viewBox="0 0 1 1"><rect x="187.5" y="447.5" width="1.8" height="2.2" fill="#a8a8a8"/><rect x="187.5" y="452.5" width="1.8" height="2.2" fill="#a8a8a8"/><rect x="187.5" y="457.5" width="1.8" height="2.2" fill="#a8a8a8"/></svg>
<div class="a" style="left:1158.5px;top:91px;width:12px;height:11px;background:#c4c4c4;border-radius:1.5px"></div>
<svg style="left:0px;top:0px;" width="1" height="1" viewBox="0 0 1 1"><circle cx="1164.5" cy="96.5" r="3.4" fill="#8a8a8a" stroke="#5a5a5a" stroke-width="1"/></svg>
<div class="a" style="left:1158.7px;top:105.5px;width:11px;height:711px;background:#5a5a5a;border-radius:2px"></div>
<div class="a" style="left:1158.7px;top:816px;width:11px;height:13px;background:#262626;"></div>
<svg style="left:0px;top:0px;" width="1" height="1" viewBox="0 0 1 1"><path d="M1165.5 830.5 L1172 843.5 L1165.5 840.5 L1159 843.5 Z" fill="#dcdcdc"/></svg>
<div class="a" style="left:207.5px;top:831px;width:948.5px;height:11.5px;background:#5c5c5c;border-radius:2px"></div>
<svg style="left:0px;top:0px;" width="1" height="1" viewBox="0 0 1 1"><rect x="193.2" y="832.2" width="10" height="10" fill="#777" stroke="#9a9a9a" stroke-width="0.8" stroke-dasharray="1 1"/></svg>
<div class="a" style="left:1170.5px;top:42px;width:2px;height:825px;background:#333333;"></div>
<div class="a" style="left:1172.5px;top:42px;width:1.5px;height:825px;background:#585858;"></div>
<div class="a" style="left:1174px;top:42px;width:2.3px;height:825px;background:#2e2e2e;"></div>
<div class="a" style="left:245.3px;top:845.7px;width:34.5px;height:19.5px;background:#2e2e2e;border-radius:2px"></div>
<div class="t" style="left:250.5px;top:851px;font-size:9.5px;color:#e6e6e6;font-weight:400;">px</div>
<svg style="left:0px;top:0px;" width="1" height="1" viewBox="0 0 1 1"><path d="M265.5 852.8 L270.3 857.6 L275.1 852.8" fill="none" stroke="#e0e0e0" stroke-width="1.5"/></svg>
<div class="a" style="left:282px;top:845.7px;width:33px;height:19.5px;background:#363636;"></div>
<div class="t" style="left:284.3px;top:851px;font-size:9.5px;color:#e6e6e6;font-weight:400;letter-spacing:-0.25px">4500%</div>
<div class="a" style="left:315.7px;top:845.7px;width:13px;height:19.5px;background:#2e2e2e;border-radius:2px"></div>
<svg style="left:0px;top:0px;" width="1" height="1" viewBox="0 0 1 1"><path d="M317.7 852.8 L322.2 857.3 L326.7 852.8" fill="none" stroke="#e0e0e0" stroke-width="1.5"/></svg>
<div class="t" style="left:330.5px;top:850.3px;font-size:10.2px;color:#e6e6e6;font-weight:400;">Pasted Layer (101.3 kB)</div>
<svg style="left:0;top:0;shape-rendering:crispEdges" width="1440" height="904"><rect x="339" y="156" width="38" height="38" fill="#9a9a9a"/><rect x="377" y="156" width="38" height="38" fill="#9a9a9a"/><rect x="415" y="156" width="38" height="38" fill="#9a9a9a"/><rect x="453" y="156" width="38" height="38" fill="#9a9a9a"/><rect x="491" y="156" width="38" height="38" fill="#9a9a9a"/><rect x="529" y="156" width="38" height="38" fill="#9a9a9a"/><rect x="567" y="156" width="38" height="38" fill="#737373"/><rect x="605" y="156" width="38" height="38" fill="#494949"/><rect x="643" y="156" width="38" height="38" fill="#3a3a3a"/><rect x="681" y="156" width="38" height="38" fill="#3b3b3b"/><rect x="719" y="156" width="38" height="38" fill="#4f4f4f"/><rect x="757" y="156" width="38" height="38" fill="#7a7a7a"/><rect x="795" y="156" width="38" height="38" fill="#9a9a9a"/><rect x="833" y="156" width="38" height="38" fill="#9a9a9a"/><rect x="871" y="156" width="38" height="38" fill="#9a9a9a"/><rect x="909" y="156" width="38" height="38" fill="#9a9a9a"/><rect x="947" y="156" width="38" height="38" fill="#9a9a9a"/><rect x="985" y="156" width="38" height="38" fill="#9a9a9a"/><rect x="339" y="194" width="38" height="38" fill="#9a9a9a"/><rect x="377" y="194" width="38" height="38" fill="#9a9a9a"/><rect x="415" y="194" width="38" height="38" fill="#9a9a9a"/><rect x="453" y="194" width="38" height="38" fill="#9a9a9a"/><rect x="491" y="194" width="38" height="38" fill="#626262"/><rect x="529" y="194" width="38" height="38" fill="#111111"/><rect x="567" y="194" width="38" height="38" fill="#000"/><rect x="605" y="194" width="38" height="38" fill="#000"/><rect x="643" y="194" width="38" height="38" fill="#000"/><rect x="681" y="194" width="38" height="38" fill="#000"/><rect x="719" y="194" width="38" height="38" fill="#000"/><rect x="757" y="194" width="38" height="38" fill="#000"/><rect x="795" y="194" width="38" height="38" fill="#1e1e1e"/><rect x="833" y="194" width="38" height="38" fill="#777777"/><rect x="871" y="194" width="38" height="38" fill="#9a9a9a"/><rect x="909" y="194" width="38" height="38" fill="#9a9a9a"/><rect x="947" y="194" width="38" height="38" fill="#9a9a9a"/><rect x="985" y="194" width="38" height="38" fill="#9a9a9a"/><rect x="339" y="232" width="38" height="38" fill="#9a9a9a"/><rect x="377" y="232" width="38" height="38" fill="#9a9a9a"/><rect x="415" y="232" width="38" height="38" fill="#999999"/><rect x="453" y="232" width="38" height="38" fill="#3a3a3a"/><rect x="491" y="232" width="38" height="38" fill="#000"/><rect x="529" y="232" width="38" height="38" fill="#000"/><rect x="567" y="232" width="38" height="38" fill="#000"/><rect x="605" y="232" width="38" height="38" fill="#000"/><rect x="643" y="232" width="38" height="38" fill="#000"/><rect x="681" y="232" width="38" height="38" fill="#000"/><rect x="719" y="232" width="38" height="38" fill="#000"/><rect x="757" y="232" width="38" height="38" fill="#000"/><rect x="795" y="232" width="38" height="38" fill="#000"/><rect x="833" y="232" width="38" height="38" fill="#000"/><rect x="871" y="232" width="38" height="38" fill="#555555"/><rect x="909" y="232" width="38" height="38" fill="#9a9a9a"/><rect x="947" y="232" width="38" height="38" fill="#9a9a9a"/><rect x="985" y="232" width="38" height="38" fill="#9a9a9a"/><rect x="339" y="270" width="38" height="38" fill="#9a9a9a"/><rect x="377" y="270" width="38" height="38" fill="#9a9a9a"/><rect x="415" y="270" width="38" height="38" fill="#3c3c3c"/><rect x="453" y="270" width="38" height="38" fill="#000"/><rect x="491" y="270" width="38" height="38" fill="#000"/><rect x="529" y="270" width="38" height="38" fill="#000"/><rect x="567" y="270" width="38" height="38" fill="#000"/><rect x="605" y="270" width="38" height="38" fill="#000"/><rect x="643" y="270" width="38" height="38" fill="#000"/><rect x="681" y="270" width="38" height="38" fill="#000"/><rect x="719" y="270" width="38" height="38" fill="#000"/><rect x="757" y="270" width="38" height="38" fill="#000"/><rect x="795" y="270" width="38" height="38" fill="#000"/><rect x="833" y="270" width="38" height="38" fill="#000"/><rect x="871" y="270" width="38" height="38" fill="#000"/><rect x="909" y="270" width="38" height="38" fill="#5c5c5c"/><rect x="947" y="270" width="38" height="38" fill="#9a9a9a"/><rect x="985" y="270" width="38" height="38" fill="#9a9a9a"/><rect x="339" y="308" width="38" height="38" fill="#9a9a9a"/><rect x="377" y="308" width="38" height="38" fill="#6c6c6c"/><rect x="415" y="308" width="38" height="38" fill="#000"/><rect x="453" y="308" width="38" height="38" fill="#000"/><rect x="491" y="308" width="38" height="38" fill="#000"/><rect x="529" y="308" width="38" height="38" fill="#000"/><rect x="567" y="308" width="38" height="38" fill="#000"/><rect x="605" y="308" width="38" height="38" fill="#000"/><rect x="643" y="308" width="38" height="38" fill="#000"/><rect x="681" y="308" width="38" height="38" fill="#000"/><rect x="719" y="308" width="38" height="38" fill="#000"/><rect x="757" y="308" width="38" height="38" fill="#000"/><rect x="795" y="308" width="38" height="38" fill="#000"/><rect x="833" y="308" width="38" height="38" fill="#000"/><rect x="871" y="308" width="38" height="38" fill="#000"/><rect x="909" y="308" width="38" height="38" fill="#090909"/><rect x="947" y="308" width="38" height="38" fill="#888888"/><rect x="985" y="308" width="38" height="38" fill="#9a9a9a"/><rect x="339" y="346" width="38" height="38" fill="#9a9a9a"/><rect x="377" y="346" width="38" height="38" fill="#222222"/><rect x="415" y="346" width="38" height="38" fill="#000"/><rect x="453" y="346" width="38" height="38" fill="#000"/><rect x="491" y="346" width="38" height="38" fill="#000"/><rect x="529" y="346" width="38" height="38" fill="#000"/><rect x="567" y="346" width="38" height="38" fill="#000"/><rect x="605" y="346" width="38" height="38" fill="#000"/><rect x="643" y="346" width="38" height="38" fill="#000"/><rect x="681" y="346" width="38" height="38" fill="#000"/><rect x="719" y="346" width="38" height="38" fill="#000"/><rect x="757" y="346" width="38" height="38" fill="#000"/><rect x="795" y="346" width="38" height="38" fill="#000"/><rect x="833" y="346" width="38" height="38" fill="#000"/><rect x="871" y="346" width="38" height="38" fill="#000"/><rect x="909" y="346" width="38" height="38" fill="#000"/><rect x="947" y="346" width="38" height="38" fill="#404040"/><rect x="985" y="346" width="38" height="38" fill="#9a9a9a"/><rect x="339" y="384" width="38" height="38" fill="#8a8a8a"/><rect x="377" y="384" width="38" height="38" fill="#000"/><rect x="415" y="384" width="38" height="38" fill="#000"/><rect x="453" y="384" width="38" height="38" fill="#000"/><rect x="491" y="384" width="38" height="38" fill="#000"/><rect x="529" y="384" width="38" height="38" fill="#000"/><rect x="567" y="384" width="38" height="38" fill="#000"/><rect x="605" y="384" width="38" height="38" fill="#000"/><rect x="643" y="384" width="38" height="38" fill="#000"/><rect x="681" y="384" width="38" height="38" fill="#000"/><rect x="719" y="384" width="38" height="38" fill="#000"/><rect x="757" y="384" width="38" height="38" fill="#000"/><rect x="795" y="384" width="38" height="38" fill="#000"/><rect x="833" y="384" width="38" height="38" fill="#000"/><rect x="871" y="384" width="38" height="38" fill="#000"/><rect x="909" y="384" width="38" height="38" fill="#000"/><rect x="947" y="384" width="38" height="38" fill="#111111"/><rect x="985" y="384" width="38" height="38" fill="#9a9a9a"/><rect x="339" y="422" width="38" height="38" fill="#6e6e6e"/><rect x="377" y="422" width="38" height="38" fill="#000"/><rect x="415" y="422" width="38" height="38" fill="#000"/><rect x="453" y="422" width="38" height="38" fill="#000"/><rect x="491" y="422" width="38" height="38" fill="#000"/><rect x="529" y="422" width="38" height="38" fill="#000"/><rect x="567" y="422" width="38" height="38" fill="#000"/><rect x="605" y="422" width="38" height="38" fill="#000"/><rect x="643" y="422" width="38" height="38" fill="#000"/><rect x="681" y="422" width="38" height="38" fill="#000"/><rect x="719" y="422" width="38" height="38" fill="#000"/><rect x="757" y="422" width="38" height="38" fill="#000"/><rect x="795" y="422" width="38" height="38" fill="#000"/><rect x="833" y="422" width="38" height="38" fill="#000"/><rect x="871" y="422" width="38" height="38" fill="#000"/><rect x="909" y="422" width="38" height="38" fill="#000"/><rect x="947" y="422" width="38" height="38" fill="#000"/><rect x="985" y="422" width="38" height="38" fill="#8c8c8c"/><rect x="339" y="460" width="38" height="38" fill="#5f5f5f"/><rect x="377" y="460" width="38" height="38" fill="#000"/><rect x="415" y="460" width="38" height="38" fill="#000"/><rect x="453" y="460" width="38" height="38" fill="#000"/><rect x="491" y="460" width="38" height="38" fill="#000"/><rect x="529" y="460" width="38" height="38" fill="#000"/><rect x="567" y="460" width="38" height="38" fill="#000"/><rect x="605" y="460" width="38" height="38" fill="#000"/><rect x="643" y="460" width="38" height="38" fill="#000"/><rect x="681" y="460" width="38" height="38" fill="#000"/><rect x="719" y="460" width="38" height="38" fill="#000"/><rect x="757" y="460" width="38" height="38" fill="#000"/><rect x="795" y="460" width="38" height="38" fill="#000"/><rect x="833" y="460" width="38" height="38" fill="#000"/><rect x="871" y="460" width="38" height="38" fill="#000"/><rect x="909" y="460" width="38" height="38" fill="#000"/><rect x="947" y="460" width="38" height="38" fill="#000"/><rect x="985" y="460" width="38" height="38" fill="#7f7f7f"/><rect x="339" y="498" width="38" height="38" fill="#676767"/><rect x="377" y="498" width="38" height="38" fill="#000"/><rect x="415" y="498" width="38" height="38" fill="#000"/><rect x="453" y="498" width="38" height="38" fill="#000"/><rect x="491" y="498" width="38" height="38" fill="#000"/><rect x="529" y="498" width="38" height="38" fill="#000"/><rect x="567" y="498" width="38" height="38" fill="#000"/><rect x="605" y="498" width="38" height="38" fill="#000"/><rect x="643" y="498" width="38" height="38" fill="#000"/><rect x="681" y="498" width="38" height="38" fill="#000"/><rect x="719" y="498" width="38" height="38" fill="#000"/><rect x="757" y="498" width="38" height="38" fill="#000"/><rect x="795" y="498" width="38" height="38" fill="#000"/><rect x="833" y="498" width="38" height="38" fill="#000"/><rect x="871" y="498" width="38" height="38" fill="#000"/><rect x="909" y="498" width="38" height="38" fill="#000"/><rect x="947" y="498" width="38" height="38" fill="#000"/><rect x="985" y="498" width="38" height="38" fill="#868686"/><rect x="339" y="536" width="38" height="38" fill="#858585"/><rect x="377" y="536" width="38" height="38" fill="#000"/><rect x="415" y="536" width="38" height="38" fill="#000"/><rect x="453" y="536" width="38" height="38" fill="#000"/><rect x="491" y="536" width="38" height="38" fill="#000"/><rect x="529" y="536" width="38" height="38" fill="#000"/><rect x="567" y="536" width="38" height="38" fill="#000"/><rect x="605" y="536" width="38" height="38" fill="#000"/><rect x="643" y="536" width="38" height="38" fill="#000"/><rect x="681" y="536" width="38" height="38" fill="#000"/><rect x="719" y="536" width="38" height="38" fill="#000"/><rect x="757" y="536" width="38" height="38" fill="#000"/><rect x="795" y="536" width="38" height="38" fill="#000"/><rect x="833" y="536" width="38" height="38" fill="#000"/><rect x="871" y="536" width="38" height="38" fill="#000"/><rect x="909" y="536" width="38" height="38" fill="#000"/><rect x="947" y="536" width="38" height="38" fill="#080808"/><rect x="985" y="536" width="38" height="38" fill="#959595"/><rect x="339" y="574" width="38" height="38" fill="#9a9a9a"/><rect x="377" y="574" width="38" height="38" fill="#111111"/><rect x="415" y="574" width="38" height="38" fill="#000"/><rect x="453" y="574" width="38" height="38" fill="#000"/><rect x="491" y="574" width="38" height="38" fill="#000"/><rect x="529" y="574" width="38" height="38" fill="#000"/><rect x="567" y="574" width="38" height="38" fill="#000"/><rect x="605" y="574" width="38" height="38" fill="#000"/><rect x="643" y="574" width="38" height="38" fill="#000"/><rect x="681" y="574" width="38" height="38" fill="#000"/><rect x="719" y="574" width="38" height="38" fill="#000"/><rect x="757" y="574" width="38" height="38" fill="#000"/><rect x="795" y="574" width="38" height="38" fill="#000"/><rect x="833" y="574" width="38" height="38" fill="#000"/><rect x="871" y="574" width="38" height="38" fill="#000"/><rect x="909" y="574" width="38" height="38" fill="#000"/><rect x="947" y="574" width="38" height="38" fill="#303030"/><rect x="985" y="574" width="38" height="38" fill="#9a9a9a"/><rect x="339" y="612" width="38" height="38" fill="#9a9a9a"/><rect x="377" y="612" width="38" height="38" fill="#555555"/><rect x="415" y="612" width="38" height="38" fill="#000"/><rect x="453" y="612" width="38" height="38" fill="#000"/><rect x="491" y="612" width="38" height="38" fill="#000"/><rect x="529" y="612" width="38" height="38" fill="#000"/><rect x="567" y="612" width="38" height="38" fill="#000"/><rect x="605" y="612" width="38" height="38" fill="#000"/><rect x="643" y="612" width="38" height="38" fill="#000"/><rect x="681" y="612" width="38" height="38" fill="#000"/><rect x="719" y="612" width="38" height="38" fill="#000"/><rect x="757" y="612" width="38" height="38" fill="#000"/><rect x="795" y="612" width="38" height="38" fill="#000"/><rect x="833" y="612" width="38" height="38" fill="#000"/><rect x="871" y="612" width="38" height="38" fill="#000"/><rect x="909" y="612" width="38" height="38" fill="#000"/><rect x="947" y="612" width="38" height="38" fill="#707070"/><rect x="985" y="612" width="38" height="38" fill="#9a9a9a"/><rect x="339" y="650" width="38" height="38" fill="#9a9a9a"/><rect x="377" y="650" width="38" height="38" fill="#999999"/><rect x="415" y="650" width="38" height="38" fill="#1e1e1e"/><rect x="453" y="650" width="38" height="38" fill="#000"/><rect x="491" y="650" width="38" height="38" fill="#000"/><rect x="529" y="650" width="38" height="38" fill="#000"/><rect x="567" y="650" width="38" height="38" fill="#000"/><rect x="605" y="650" width="38" height="38" fill="#000"/><rect x="643" y="650" width="38" height="38" fill="#000"/><rect x="681" y="650" width="38" height="38" fill="#000"/><rect x="719" y="650" width="38" height="38" fill="#000"/><rect x="757" y="650" width="38" height="38" fill="#000"/><rect x="795" y="650" width="38" height="38" fill="#000"/><rect x="833" y="650" width="38" height="38" fill="#000"/><rect x="871" y="650" width="38" height="38" fill="#000"/><rect x="909" y="650" width="38" height="38" fill="#373737"/><rect x="947" y="650" width="38" height="38" fill="#9a9a9a"/><rect x="985" y="650" width="38" height="38" fill="#9a9a9a"/><rect x="339" y="688" width="38" height="38" fill="#9a9a9a"/><rect x="377" y="688" width="38" height="38" fill="#9a9a9a"/><rect x="415" y="688" width="38" height="38" fill="#888888"/><rect x="453" y="688" width="38" height="38" fill="#131313"/><rect x="491" y="688" width="38" height="38" fill="#000"/><rect x="529" y="688" width="38" height="38" fill="#000"/><rect x="567" y="688" width="38" height="38" fill="#000"/><rect x="605" y="688" width="38" height="38" fill="#000"/><rect x="643" y="688" width="38" height="38" fill="#000"/><rect x="681" y="688" width="38" height="38" fill="#000"/><rect x="719" y="688" width="38" height="38" fill="#000"/><rect x="757" y="688" width="38" height="38" fill="#000"/><rect x="795" y="688" width="38" height="38" fill="#000"/><rect x="833" y="688" width="38" height="38" fill="#000"/><rect x="871" y="688" width="38" height="38" fill="#252525"/><rect x="909" y="688" width="38" height="38" fill="#999999"/><rect x="947" y="688" width="38" height="38" fill="#9a9a9a"/><rect x="985" y="688" width="38" height="38" fill="#9a9a9a"/><rect x="339" y="726" width="38" height="38" fill="#9a9a9a"/><rect x="377" y="726" width="38" height="38" fill="#9a9a9a"/><rect x="415" y="726" width="38" height="38" fill="#9a9a9a"/><rect x="453" y="726" width="38" height="38" fill="#8e8e8e"/><rect x="491" y="726" width="38" height="38" fill="#2a2a2a"/><rect x="529" y="726" width="38" height="38" fill="#000"/><rect x="567" y="726" width="38" height="38" fill="#000"/><rect x="605" y="726" width="38" height="38" fill="#000"/><rect x="643" y="726" width="38" height="38" fill="#000"/><rect x="681" y="726" width="38" height="38" fill="#000"/><rect x="719" y="726" width="38" height="38" fill="#000"/><rect x="757" y="726" width="38" height="38" fill="#000"/><rect x="795" y="726" width="38" height="38" fill="#060606"/><rect x="833" y="726" width="38" height="38" fill="#404040"/><rect x="871" y="726" width="38" height="38" fill="#999999"/><rect x="909" y="726" width="38" height="38" fill="#9a9a9a"/><rect x="947" y="726" width="38" height="38" fill="#9a9a9a"/><rect x="985" y="726" width="38" height="38" fill="#9a9a9a"/><rect x="339" y="764" width="38" height="38" fill="#9a9a9a"/><rect x="377" y="764" width="38" height="38" fill="#9a9a9a"/><rect x="415" y="764" width="38" height="38" fill="#9a9a9a"/><rect x="453" y="764" width="38" height="38" fill="#9a9a9a"/><rect x="491" y="764" width="38" height="38" fill="#9a9a9a"/><rect x="529" y="764" width="38" height="38" fill="#707070"/><rect x="567" y="764" width="38" height="38" fill="#3e3e3e"/><rect x="605" y="764" width="38" height="38" fill="#1b1b1b"/><rect x="643" y="764" width="38" height="38" fill="#0a0a0a"/><rect x="681" y="764" width="38" height="38" fill="#0b0b0b"/><rect x="719" y="764" width="38" height="38" fill="#1e1e1e"/><rect x="757" y="764" width="38" height="38" fill="#4a4a4a"/><rect x="795" y="764" width="38" height="38" fill="#868686"/><rect x="833" y="764" width="38" height="38" fill="#9a9a9a"/><rect x="871" y="764" width="38" height="38" fill="#9a9a9a"/><rect x="909" y="764" width="38" height="38" fill="#9a9a9a"/><rect x="947" y="764" width="38" height="38" fill="#9a9a9a"/><rect x="985" y="764" width="38" height="38" fill="#9a9a9a"/></svg>
<svg style="left:0;top:0" width="1440" height="904"><path d="M339 156.5 h38 M339 801.5 h38 M377 156.5 h38 M377 801.5 h38 M415 156.5 h38 M415 801.5 h38 M453 156.5 h38 M453 801.5 h38 M491 156.5 h38 M491 801.5 h38 M795 156.5 h38 M833 156.5 h38 M833 801.5 h38 M871 156.5 h38 M871 801.5 h38 M909 156.5 h38 M909 801.5 h38 M947 156.5 h38 M947 801.5 h38 M985 156.5 h38 M985 801.5 h38 M338.5 156 v38 M1022.5 156 v38 M338.5 194 v38 M1022.5 194 v38 M338.5 232 v38 M1022.5 232 v38 M338.5 270 v38 M1022.5 270 v38 M338.5 308 v38 M1022.5 308 v38 M338.5 346 v38 M1022.5 346 v38 M1022.5 384 v38 M338.5 574 v38 M1022.5 574 v38 M338.5 612 v38 M1022.5 612 v38 M338.5 650 v38 M1022.5 650 v38 M338.5 688 v38 M1022.5 688 v38 M338.5 726 v38 M1022.5 726 v38 M338.5 764 v38 M1022.5 764 v38" stroke="#111" stroke-width="1.2" fill="none"/><path d="M339 156.5 h38 M339 801.5 h38 M377 156.5 h38 M377 801.5 h38 M415 156.5 h38 M415 801.5 h38 M453 156.5 h38 M453 801.5 h38 M491 156.5 h38 M491 801.5 h38 M795 156.5 h38 M833 156.5 h38 M833 801.5 h38 M871 156.5 h38 M871 801.5 h38 M909 156.5 h38 M909 801.5 h38 M947 156.5 h38 M947 801.5 h38 M985 156.5 h38 M985 801.5 h38 M338.5 156 v38 M1022.5 156 v38 M338.5 194 v38 M1022.5 194 v38 M338.5 232 v38 M1022.5 232 v38 M338.5 270 v38 M1022.5 270 v38 M338.5 308 v38 M1022.5 308 v38 M338.5 346 v38 M1022.5 346 v38 M1022.5 384 v38 M338.5 574 v38 M1022.5 574 v38 M338.5 612 v38 M1022.5 612 v38 M338.5 650 v38 M1022.5 650 v38 M338.5 688 v38 M1022.5 688 v38 M338.5 726 v38 M1022.5 726 v38 M338.5 764 v38 M1022.5 764 v38" stroke="#e8e85a" stroke-width="1.2" fill="none" stroke-dasharray="4 3"/><path d="M529 156.5 h38 M529.5 156 v38 M567 156.5 h38 M605 156.5 h38 M643 156.5 h38 M681 156.5 h38 M719 156.5 h38 M757 156.5 h38 M795.5 156 v38 M491 194.5 h38 M491.5 194 v38 M795 194.5 h38 M833 194.5 h38 M871.5 194 v38 M415 232.5 h38 M415.5 232 v38 M453 232.5 h38 M871 232.5 h38 M909.5 232 v38 M415.5 270 v38 M909 270.5 h38 M947.5 270 v38 M377 308.5 h38 M377.5 308 v38 M947 308.5 h38 M985.5 308 v38 M377.5 346 v38 M985.5 346 v38 M339 384.5 h38 M339.5 384 v38 M985.5 384 v38 M339.5 422 v38 M985 422.5 h38 M1023.5 422 v38 M339.5 460 v38 M1023.5 460 v38 M339.5 498 v38 M1023.5 498 v38 M339 574.5 h38 M339.5 536 v38 M985 574.5 h38 M1023.5 536 v38 M377.5 574 v38 M985.5 574 v38 M377.5 612 v38 M947 650.5 h38 M985.5 612 v38 M377 688.5 h38 M377.5 650 v38 M947.5 650 v38 M415 726.5 h38 M415.5 688 v38 M909 726.5 h38 M947.5 688 v38 M453 764.5 h38 M453.5 726 v38 M491 764.5 h38 M833 764.5 h38 M871 764.5 h38 M909.5 726 v38 M529 802.5 h38 M529.5 764 v38 M567 802.5 h38 M605 802.5 h38 M643 802.5 h38 M681 802.5 h38 M719 802.5 h38 M757 802.5 h38 M795 802.5 h38 M833.5 764 v38" stroke="#111" stroke-width="1.6" fill="none"/><path d="M529 156.5 h38 M529.5 156 v38 M567 156.5 h38 M605 156.5 h38 M643 156.5 h38 M681 156.5 h38 M719 156.5 h38 M757 156.5 h38 M795.5 156 v38 M491 194.5 h38 M491.5 194 v38 M795 194.5 h38 M833 194.5 h38 M871.5 194 v38 M415 232.5 h38 M415.5 232 v38 M453 232.5 h38 M871 232.5 h38 M909.5 232 v38 M415.5 270 v38 M909 270.5 h38 M947.5 270 v38 M377 308.5 h38 M377.5 308 v38 M947 308.5 h38 M985.5 308 v38 M377.5 346 v38 M985.5 346 v38 M339 384.5 h38 M339.5 384 v38 M985.5 384 v38 M339.5 422 v38 M985 422.5 h38 M1023.5 422 v38 M339.5 460 v38 M1023.5 460 v38 M339.5 498 v38 M1023.5 498 v38 M339 574.5 h38 M339.5 536 v38 M985 574.5 h38 M1023.5 536 v38 M377.5 574 v38 M985.5 574 v38 M377.5 612 v38 M947 650.5 h38 M985.5 612 v38 M377 688.5 h38 M377.5 650 v38 M947.5 650 v38 M415 726.5 h38 M415.5 688 v38 M909 726.5 h38 M947.5 688 v38 M453 764.5 h38 M453.5 726 v38 M491 764.5 h38 M833 764.5 h38 M871 764.5 h38 M909.5 726 v38 M529 802.5 h38 M529.5 764 v38 M567 802.5 h38 M605 802.5 h38 M643 802.5 h38 M681 802.5 h38 M719 802.5 h38 M757 802.5 h38 M795 802.5 h38 M833.5 764 v38" stroke="#f2f2f2" stroke-width="1.6" fill="none" stroke-dasharray="4 3"/></svg>
<div class="a" style="left:1176.3px;top:42px;width:235.7px;height:825px;background:#474747;"></div>
<div class="a" style="left:1176.3px;top:42px;width:1px;height:825px;background:#555555;"></div>
<div class="a" style="left:1177px;top:42px;width:95px;height:19.5px;background:#2a2a2a;"></div>
<div class="a" style="left:1272px;top:42px;width:19.5px;height:19.5px;background:#474747;border:1px solid #565656;border-bottom:none"></div>
<div class="a" style="left:1291.5px;top:61px;width:120px;height:1px;background:#565656;"></div>
<svg style="left:0px;top:0px;" width="1" height="1" viewBox="0 0 1 1">
<rect x="1180" y="45.3" width="14" height="14.4" fill="#f2b84e"/>
<rect x="1180.6" y="45.3" width="2.2" height="14.4" fill="#e19a3c"/><rect x="1184.6" y="45.3" width="1.6" height="14.4" fill="#fbd27c"/>
<rect x="1187.2" y="45.3" width="1.4" height="14.4" fill="#e6a544"/><rect x="1190.4" y="45.3" width="1.8" height="14.4" fill="#f9cc72"/>
<rect x="1200" y="45.3" width="14.3" height="14.4" fill="#fff"/>
<rect x="1219" y="45.3" width="14.3" height="14.4" fill="#6e6e6e"/>
<rect x="1220.4" y="46.6" width="11.5" height="11.8" rx="4" fill="#000"/>
<rect x="1237.3" y="45.5" width="6.5" height="6.5" fill="#cfcfcf"/><rect x="1238.8" y="47.3" width="3.5" height="1" fill="#333"/><rect x="1238.8" y="49.2" width="3.5" height="1" fill="#333"/>
<rect x="1245" y="45.5" width="6.5" height="6.5" fill="#555"/>
<rect x="1237.3" y="53.2" width="6.5" height="6.5" fill="#cfcfcf"/>
<rect x="1245" y="53.2" width="6.5" height="6.5" fill="#bdbdbd"/><rect x="1246.5" y="54.7" width="3.5" height="3.5" fill="#555"/>
<g transform="translate(2527.8 0) scale(-1 1)">
<path d="M1263.5 45.8 C 1268.5 45.8 1271 48.8 1270.8 52.3 C 1270.6 55 1268 54.3 1267.6 56 C 1267.3 57.6 1268.5 58.6 1266 59.6 C 1260.5 60.8 1257 57 1257 52.5 C 1257 48.5 1259.6 45.8 1263.5 45.8 Z" fill="#d0d0d0"/>
<circle cx="1261" cy="50" r="1.3" fill="#2a2a2a"/><circle cx="1265" cy="49" r="1.3" fill="#2a2a2a"/><circle cx="1260.5" cy="54.2" r="1.3" fill="#2a2a2a"/><circle cx="1263.6" cy="57" r="1.3" fill="#2a2a2a"/>
</g>
<g fill="none" stroke-width="1.6">
 <path d="M1279.5 48.3 H1285 C 1287.5 48.3 1288.2 50.6 1287.5 52.1" stroke="#8a8a8a"/>
 <path d="M1277 53.2 H1283.5 C 1286 53.2 1286.7 55.5 1286 57 C 1285.3 58.5 1284 58.6 1282 58.6" stroke="#d0d0d0"/>
</g>
<path d="M1278 48.3 L1281.4 45.6 L1281.4 51 Z" fill="#8a8a8a"/>
<path d="M1275.3 53.2 L1279.3 50.2 L1279.3 56.2 Z" fill="#d0d0d0"/>
</svg>
<div class="t" style="left:1201.6px;top:47.8px;font-size:10px;color:#3a3a3a;font-weight:400;text-shadow:none;letter-spacing:-0.6px;-webkit-text-stroke:0">Aa</div>
<svg style="left:0px;top:0px;" width="1" height="1" viewBox="0 0 1 1"><rect x="1398.5" y="47.3" width="9" height="9.5" fill="none" stroke="#aaa" stroke-width="1"/><path d="M1405.5 49.5 L1401 52.0 L1405.5 54.5 Z" fill="#aaa"/></svg>
<div class="a" style="left:1177px;top:62px;width:219px;height:190px;background:#303030;"></div>
<div class="a" style="left:1396px;top:62px;width:12.5px;height:190px;background:#2a2a2a;"></div>
<div class="a" style="left:1397px;top:190px;width:10.5px;height:61px;background:#4c4c4c;border-radius:2px"></div>
<div class="a" style="left:1177px;top:206.2px;width:219px;height:45.5px;background:#232323;"></div>
<div class="a" style="left:1181.3px;top:62px;width:41.3px;height:5px;background:transparent;border:1px solid #1c1c1c;border-top:none"></div>
<div class="a" style="left:1181.3px;top:71.3px;width:41.3px;height:41.5px;background:transparent;border:1px solid #1c1c1c"></div>
<svg style="left:1194px;top:84.3px" width="16" height="15"><rect width="16" height="15" fill="#9a9a9a"/><circle cx="8" cy="7.5" r="7.3" fill="#000"/></svg>
<div class="t" style="left:1226px;top:87.8px;font-size:9px;color:#e0e0e0;font-weight:400;">Add Alpha Channel</div>
<div class="a" style="left:1181.3px;top:117px;width:41.3px;height:41.5px;background:transparent;border:1px solid #1c1c1c"></div>
<svg style="left:1194px;top:130px" width="16" height="15"><rect width="16" height="15" fill="#9a9a9a"/><circle cx="8" cy="7.5" r="7.6" fill="#fff"/></svg>
<div class="t" style="left:1226px;top:133.5px;font-size:9px;color:#e0e0e0;font-weight:400;">Select by Color</div>
<div class="a" style="left:1181.3px;top:162.5px;width:41.3px;height:41.5px;background:transparent;border:1px solid #1c1c1c"></div>
<svg style="left:1194px;top:175.5px" width="16" height="15"><rect width="16" height="15" fill="#c8c8c8"/><circle cx="8" cy="7.5" r="7" fill="#000"/><rect x="0.5" y="0.5" width="15" height="14" fill="none" stroke="#111" stroke-width="1" stroke-dasharray="3 3" stroke-dashoffset="1.5"/></svg>
<div class="t" style="left:1226px;top:179.0px;font-size:9px;color:#e0e0e0;font-weight:400;">Invert Selection</div>
<div class="a" style="left:1181.3px;top:208.5px;width:41.3px;height:41.5px;background:transparent;border:1px solid #1c1c1c"></div>
<svg style="left:1194px;top:221.5px" width="16" height="15"><rect width="16" height="15" fill="#9a9a9a"/><circle cx="8" cy="7.5" r="7.6" fill="#fff"/><rect x="0" y="0" width="16" height="15" fill="none" stroke="#111" stroke-width="1.2"/></svg>
<div class="t" style="left:1226px;top:225.0px;font-size:9px;color:#e0e0e0;font-weight:400;">Invert Selection</div>
<div class="a" style="left:1177px;top:252px;width:231px;height:24px;background:#434343;"></div>
<svg style="left:0px;top:1.8px;" width="1" height="1" viewBox="0 0 1 1">
<g fill="none" stroke="#b8b8b8" stroke-width="1.8">
 <path d="M1212 260.5 H1217 C 1219.5 260.5 1220.2 263 1219.6 264.6 C 1219 266.2 1217.6 267 1215.4 267"/>
 <path d="M1298 260.5 H1293 C 1290.5 260.5 1289.8 263 1290.4 264.6 C 1291 266.2 1292.4 267 1294.6 267"/>
</g>
<path d="M1210.3 260.5 L1213.8 257.6 L1213.8 263.4 Z" fill="#b8b8b8"/>
<path d="M1299.7 260.5 L1296.2 257.6 L1296.2 263.4 Z" fill="#b8b8b8"/>
<g fill="#b8b8b8">
 <path d="M1364 257.5 C 1364 256 1365 255.3 1366.5 255.3 H1371.5 C 1373 255.3 1374 256 1374 257.5 V260 H1372.5 V257.6 C1372.5 257 1372 256.8 1371.5 256.8 H1366.5 C 1366 256.8 1365.5 257 1365.5 257.6 V260 H1364Z"/>
 <rect x="1362.3" y="260" width="13.6" height="4.5" rx="1"/>
 <rect x="1364" y="265.2" width="1.4" height="4"/><rect x="1366.6" y="265.2" width="1.4" height="4"/><rect x="1369.2" y="265.2" width="1.4" height="4"/><rect x="1371.8" y="265.2" width="1.4" height="4"/>
</g>
</svg>
<div class="a" style="left:1177px;top:276px;width:231px;height:1px;background:#555;"></div>
<svg style="left:0px;top:0px;" width="1" height="1" viewBox="0 0 1 1"><rect x="1287.5" y="277.6" width="2.6" height="1.5" fill="#9a9a9a"/><rect x="1292" y="277.6" width="2.6" height="1.5" fill="#9a9a9a"/><rect x="1296.5" y="277.6" width="2.6" height="1.5" fill="#9a9a9a"/></svg>
<div class="a" style="left:1177px;top:282px;width:46.5px;height:15.5px;background:#474747;border:1px solid #565656;border-bottom:none"></div>
<div class="a" style="left:1224px;top:282.5px;width:99px;height:15px;background:#2d2d2d;"></div>
<div class="a" style="left:1177px;top:297.3px;width:231px;height:1px;background:#565656;"></div>
<svg style="left:0px;top:0px;" width="1" height="1" viewBox="0 0 1 1">
<g fill="#b8b8b8">
 <path d="M1181 284.5 L1191 284.5 L1189 287.8 L1179 287.8 Z"/>
 <path d="M1181 288.8 L1191 288.8 L1189 292 L1179 292 Z"/>
 <path d="M1181 293 L1191 293 L1189 296.3 L1179 296.3 Z"/>
</g>
<rect x="1225" y="283.2" width="14" height="13" rx="1.5" fill="none" stroke="#aaa" stroke-width="1.1"/>
<path d="M1229 285.5 V294.5 M1232 285.5 V294.5 M1235 285.5 V294.5" stroke="#d0d0d0" stroke-width="1.2"/>
<g fill="none" stroke="#b8b8b8" stroke-width="1.4">
 <path d="M1283 289 C 1285 286.5 1292 286.5 1294 289"/>
 <path d="M1284 296 C 1285.5 291 1291.5 291 1293 296"/>
</g>
<rect x="1281.5" y="286.5" width="3.5" height="3.5" fill="#b8b8b8"/><rect x="1292" y="286.5" width="3.5" height="3.5" fill="#b8b8b8"/>
<rect x="1286.5" y="285.8" width="4.5" height="1.5" fill="#b8b8b8"/>
</svg>
<div class="t" style="left:1193.5px;top:285.5px;font-size:8.8px;color:#e8e8e8;font-weight:400;">Layers</div>
<div class="t" style="left:1239.5px;top:286.2px;font-size:8.8px;color:#e0e0e0;font-weight:400;">Channels</div>
<div class="t" style="left:1297px;top:286.2px;font-size:8.8px;color:#e0e0e0;font-weight:400;">Paths</div>
<svg style="left:0px;top:0px;" width="1" height="1" viewBox="0 0 1 1"><rect x="1398.5" y="286.0" width="9" height="9.5" fill="none" stroke="#aaa" stroke-width="1"/><path d="M1405.5 288.2 L1401 290.7 L1405.5 293.2 Z" fill="#aaa"/></svg>
<div class="a" style="left:1178.8px;top:301.8px;width:189.2px;height:20.2px;background:#2a2a2a;border-radius:3px"></div>
<div class="t" style="left:1184.5px;top:306.7px;font-size:9px;color:#e6e6e6;font-weight:400;">Mode</div>
<div class="t" style="left:1319.3px;top:306.7px;font-size:9px;color:#e6e6e6;font-weight:400;">Normal</div>
<svg style="left:0px;top:0px;" width="1" height="1" viewBox="0 0 1 1"><path d="M1353 308.8 L1358 313.8 L1363 308.8" fill="none" stroke="#e0e0e0" stroke-width="1.5"/></svg>
<div class="a" style="left:1370px;top:301.8px;width:38.5px;height:20.2px;background:#2a2a2a;border-radius:3px"></div>
<svg style="left:0px;top:0px;" width="1" height="1" viewBox="0 0 1 1">
<path d="M1377.5 309 C 1378.5 306.5 1382 305.5 1384.2 307.5 C 1386.5 309.8 1385.5 314 1382 314.5" fill="none" stroke="#d0d0d0" stroke-width="1.5"/>
<path d="M1376 309.5 L1379.8 306.5 L1380.2 311.2 Z" fill="#d0d0d0"/>
<circle cx="1377.6" cy="315.2" r="1.8" fill="#d0d0d0"/>
<path d="M1393 308.8 L1397.8 313.6 L1402.6 308.8" fill="none" stroke="#e0e0e0" stroke-width="1.5"/>
</svg>
<div class="a" style="left:1178.5px;top:323.8px;width:230px;height:11.8px;background:#5a5a5a;border:1px solid #6e6e6e"></div>
<div class="a" style="left:1396px;top:324.8px;width:11.5px;height:9.8px;background:#3c3c3c;"></div>
<div class="t" style="left:1180px;top:325px;font-size:9px;color:#ececec;font-weight:400;">Opacity</div>
<div class="t" style="left:1372px;top:325px;font-size:9px;color:#ececec;font-weight:400;">100.0</div>
<svg style="left:0px;top:0px;" width="1" height="1" viewBox="0 0 1 1"><path d="M1399.4 328.3 L1401.8 326.2 L1404.2 328.3 M1399.4 331.8 L1401.8 334 L1404.2 331.8" fill="none" stroke="#ddd" stroke-width="1.2"/></svg>
<div class="t" style="left:1178px;top:342px;font-size:9px;color:#e6e6e6;font-weight:400;">Lock:</div>
<svg style="left:0px;top:0px;" width="1" height="1" viewBox="0 0 1 1">
<path d="M1217.4 341 L1218.4 342 L1212.8 349.6 L1211.2 348.4 Z" fill="#b8b8b8"/>
<path d="M1210.8 348.6 L1212.8 350 C 1212.2 352.2 1210.6 353.4 1207.6 353.6 C 1208.8 352.2 1208.6 349.8 1210.8 348.6 Z" fill="#b8b8b8"/>
<g fill="#b8b8b8">
 <rect x="1233.2" y="341" width="1.6" height="12"/><rect x="1228" y="346.2" width="12" height="1.6"/>
 <path d="M1234 339.5 L1236.6 342.3 L1231.4 342.3 Z M1234 354.5 L1236.6 351.7 L1231.4 351.7 Z M1226.6 347 L1229.4 344.4 L1229.4 349.6 Z M1241.4 347 L1238.6 344.4 L1238.6 349.6 Z"/>
</g>
<rect x="1250.5" y="340.5" width="13" height="13" fill="#b0b0b0"/>
<path d="M1250.5 340.5 h3.25 v3.25 h-3.25z M1257 340.5 h3.25 v3.25 h-3.25z M1253.75 343.75 h3.25 v3.25 h-3.25z M1260.25 343.75 h3.25 v3.25 h-3.25z M1250.5 347 h3.25 v3.25 h-3.25z M1257 347 h3.25 v3.25 h-3.25z M1253.75 350.25 h3.25 v3.25 h-3.25z M1260.25 350.25 h3.25 v3.25 h-3.25z" fill="#5a5a5a"/>
</svg>
<div class="a" style="left:1177px;top:357px;width:231.5px;height:486px;background:#2e2e2e;"></div>
<div class="a" style="left:1178px;top:359.3px;width:230px;height:32.7px;background:#232323;"></div>
<svg style="left:0px;top:0px;" width="1" height="1" viewBox="0 0 1 1">
<path d="M1183.5 375.5 C 1186.5 371 1194 371 1197 375.5 C 1194 380 1186.5 380 1183.5 375.5 Z" fill="none" stroke="#d0d0d0" stroke-width="1.3"/>
<circle cx="1190.2" cy="375.3" r="2.6" fill="#d0d0d0"/><circle cx="1190.8" cy="374.8" r="0.9" fill="#232323"/>
</svg>
<svg style="left:1242px;top:361px" width="31" height="30"><rect width="31" height="30" fill="#fff"/><rect x="2" y="2" width="27" height="26" fill="#9a9a9a"/><circle cx="15.5" cy="15" r="12.3" fill="#000"/></svg>
<div class="t" style="left:1276px;top:370.5px;font-size:9px;color:#e6e6e6;font-weight:400;">Pasted Layer</div>
<div class="a" style="left:1177px;top:843px;width:231.5px;height:23.5px;background:#3e3e3e;"></div>
<div class="a" style="left:1408.5px;top:42px;width:3.5px;height:825px;background:#474747;"></div>
<svg style="left:0px;top:0px;" width="1" height="1" viewBox="0 0 1 1">
<g fill="none" stroke="#b8b8b8" stroke-width="1.3">
 <path d="M1188 851.5 V861 H1197 V853.5 L1194.5 851 H1192"/>
 <path d="M1213.5 853.5 V861.2 H1226.5 V853.5 H1220 L1218.6 851.6 H1213.5 Z" stroke-width="1.5"/>
 <path d="M1244.2 857.6 L1249 852.8 L1253.8 857.6" stroke-width="1.8"/>
 <path d="M1272.4 852.6 L1277.2 857.4 L1282 852.6" stroke-width="1.8"/>
 <rect x="1300" y="850.7" width="7.5" height="5.5"/>
 <path d="M1303.2 856.2 V859.4 H1312.5 V853.6 H1307.5"/>
</g>
<g fill="#b8b8b8">
 <rect x="1189.5" y="849.5" width="1.3" height="5"/><rect x="1187.6" y="851.4" width="5" height="1.3"/>
 <rect x="1219.2" y="854.2" width="1.6" height="6"/><rect x="1217" y="856.4" width="6" height="1.6"/>
 <path d="M1329.5 852 L1336.5 851 L1336 853 L1329 854 Z M1329.5 855 L1336.5 854 L1336 856 L1329 857 Z M1329.5 858 L1336.5 857 L1336 859 L1329 860 Z"/>
 <rect x="1338.6" y="850.5" width="1.5" height="7.5"/><path d="M1336.6 857.5 L1342.1 857.5 L1339.35 861 Z"/>
 <path d="M1360.5 849.5 H1367.5 V855 C 1367.5 857 1366 858 1364 858 C 1362 858 1360.5 857 1360.5 855 Z"/>
 <path d="M1357.5 860.5 L1362 856 L1371.5 856 L1367.5 861.5 Z"/>
 <rect x="1386.5" y="848" width="14" height="14" rx="1.5" fill="#cdcdcd"/>
</g>
<circle cx="1362.6" cy="852.5" r="0.8" fill="#3e3e3e"/><circle cx="1365.4" cy="852.5" r="0.8" fill="#3e3e3e"/>
<path d="M1389.5 851 L1397.5 859 M1397.5 851 L1389.5 859" stroke="#3e3e3e" stroke-width="2.2"/>
</svg>
<div class="a" style="left:27.5px;top:41px;width:1384.5px;height:827.5px;background:transparent;border:1px solid #5a5a5a;border-top:none;border-radius:0 0 4px 4px"></div>
<div class="a" style="left:1054px;top:442px;width:234px;height:347px;background:transparent;border-radius:5px;box-shadow:0 6px 22px 6px rgba(0,0,0,0.45)"></div>
<div class="a" style="left:1054px;top:442px;width:234px;height:347px;background:#434343;border-radius:5px;overflow:hidden"></div>
<div class="a" style="left:1054px;top:442px;width:234px;height:20px;border-radius:5px 5px 0 0;background:linear-gradient(#ececec,#d6d6d6);border-bottom:1px solid #b0b0b0"></div>
<div class="a" style="left:1060.8px;top:447px;width:10.5px;height:10.5px;background:#fc605c;border-radius:50%;border:0.5px solid #de4a46"></div>
<div class="a" style="left:1077.8px;top:447px;width:10.5px;height:10.5px;background:#fdbc40;border-radius:50%;border:0.5px solid #de9f34"></div>
<div class="a" style="left:1094.7px;top:447px;width:10.5px;height:10.5px;background:#34c84a;border-radius:50%;border:0.5px solid #27aa36"></div>
<div class="t" style="left:1127px;top:446.8px;font-size:11.4px;color:#4d4d4d;font-weight:400;text-shadow:none;-webkit-text-stroke:0">Image Properties</div>
<div class="a" style="left:1054px;top:462px;width:234px;height:31px;background:#3c3c3c;"></div>
<svg style="left:0px;top:0px;" width="1" height="1" viewBox="0 0 1 1">
<circle cx="1066.7" cy="474" r="9.6" fill="none" stroke="#c4c4c4" stroke-width="2"/>
<rect x="1065.2" y="471.3" width="3" height="8.2" fill="#c4c4c4"/>
<circle cx="1066.7" cy="467.9" r="1.6" fill="#c4c4c4"/>
</svg>
<div class="t" style="left:1082px;top:463.2px;font-size:12.3px;color:#f2f2f2;font-weight:700;">Image Properties</div>
<div class="t" style="left:1082px;top:475px;font-size:8.85px;color:#ececec;font-weight:400;">Center Dot, in Black 2.2 x 2 pt Remove ...</div>
<svg style="left:1254.7px;top:464.2px" width="28" height="26"><rect width="28" height="26" fill="#9a9a9a"/><circle cx="14" cy="13" r="12.8" fill="#000"/></svg>
<div class="a" style="left:1254.2px;top:463.7px;width:29px;height:27px;background:transparent;border:1px solid #2b2b2b"></div>
<div class="a" style="left:1055px;top:494px;width:232px;height:18px;background:#3c3c3c;"></div>
<div class="a" style="left:1111.8px;top:495.3px;width:64.2px;height:16px;background:#2e2e2e;"></div>
<div class="a" style="left:1177.3px;top:495.3px;width:52px;height:16px;background:#2e2e2e;"></div>
<div class="a" style="left:1056.5px;top:495px;width:53px;height:16.5px;background:#444;border:1px solid #5a5a5a;border-bottom:none"></div>
<div class="a" style="left:1058px;top:496.8px;width:50px;height:13px;background:transparent;border:1px dotted #aaa"></div>
<div class="t" style="left:1059.4px;top:498.5px;font-size:10.3px;color:#f0f0f0;font-weight:400;">Properties</div>
<div class="t" style="left:1114.8px;top:498.5px;font-size:10.3px;color:#e8e8e8;font-weight:400;">Color Profile</div>
<div class="t" style="left:1180.5px;top:498.5px;font-size:10.3px;color:#e8e8e8;font-weight:400;">Comment</div>
<div class="a" style="left:1055px;top:511.5px;width:232px;height:234px;background:#3c3c3c;border:1px solid #575757;border-top:1px solid #5a5a5a"></div>
<div class="t" style="left:966px;top:523.7px;width:200px;text-align:right;font-size:10px;font-weight:700;color:#ececec">Size in pixels:</div>
<div class="t" style="left:1171.3px;top:523.7px;font-size:10.3px;color:#ececec;font-weight:400;">18 × 17 pixels</div>
<div class="t" style="left:966px;top:536.2px;width:200px;text-align:right;font-size:10px;font-weight:700;color:#ececec">Print size:</div>
<div class="t" style="left:1171.3px;top:536.2px;font-size:10.3px;color:#ececec;font-weight:400;">0.76 × 0.72 millimeters</div>
<div class="t" style="left:966px;top:548.8px;width:200px;text-align:right;font-size:10px;font-weight:700;color:#ececec">Resolution:</div>
<div class="t" style="left:1171.3px;top:548.8px;font-size:10.3px;color:#ececec;font-weight:400;">600 × 600 ppi</div>
<div class="t" style="left:966px;top:561.4px;width:200px;text-align:right;font-size:10px;font-weight:700;color:#ececec">Color space:</div>
<div class="t" style="left:1171.3px;top:561.4px;font-size:10.3px;color:#ececec;font-weight:400;">RGB color</div>
<div class="t" style="left:966px;top:574.0px;width:200px;text-align:right;font-size:10px;font-weight:700;color:#ececec">Precision:</div>
<div class="t" style="left:1171.3px;top:574.0px;font-size:10.3px;color:#ececec;font-weight:400;">8-bit gamma integer</div>
<div class="t" style="left:966px;top:594.5px;width:200px;text-align:right;font-size:10px;font-weight:700;color:#ececec">File Name:</div>
<div class="t" style="left:1171.3px;top:594.5px;font-size:10.3px;color:#ececec;font-weight:400;">/Users/car… Alpha.xcf</div>
<div class="t" style="left:966px;top:607.0px;width:200px;text-align:right;font-size:10px;font-weight:700;color:#ececec">File Size:</div>
<div class="t" style="left:1171.3px;top:607.0px;font-size:10.3px;color:#ececec;font-weight:400;">1.4 kB</div>
<div class="t" style="left:966px;top:619.6px;width:200px;text-align:right;font-size:10px;font-weight:700;color:#ececec">File Type:</div>
<div class="t" style="left:1171.3px;top:619.6px;font-size:10.3px;color:#ececec;font-weight:400;">GIMP XCF image</div>
<div class="t" style="left:966px;top:640.8px;width:200px;text-align:right;font-size:10px;font-weight:700;color:#ececec">Size in memory:</div>
<div class="t" style="left:1171.3px;top:640.8px;font-size:10.3px;color:#ececec;font-weight:400;">101.3 kB</div>
<div class="t" style="left:966px;top:653.3px;width:200px;text-align:right;font-size:10px;font-weight:700;color:#ececec">Undo steps:</div>
<div class="t" style="left:1171.3px;top:653.3px;font-size:10.3px;color:#ececec;font-weight:400;">11 (94.3 kB)</div>
<div class="t" style="left:966px;top:665.9px;width:200px;text-align:right;font-size:10px;font-weight:700;color:#ececec">Redo steps:</div>
<div class="t" style="left:1171.3px;top:665.9px;font-size:10.3px;color:#ececec;font-weight:400;">None</div>
<div class="t" style="left:966px;top:686.2px;width:200px;text-align:right;font-size:10px;font-weight:700;color:#ececec">Number of pixels:</div>
<div class="t" style="left:1171.3px;top:686.2px;font-size:10.3px;color:#ececec;font-weight:400;">306</div>
<div class="t" style="left:966px;top:698.8px;width:200px;text-align:right;font-size:10px;font-weight:700;color:#ececec">Number of layers:</div>
<div class="t" style="left:1171.3px;top:698.8px;font-size:10.3px;color:#ececec;font-weight:400;">1</div>
<div class="t" style="left:966px;top:711.4px;width:200px;text-align:right;font-size:10px;font-weight:700;color:#ececec">Number of channels:</div>
<div class="t" style="left:1171.3px;top:711.4px;font-size:10.3px;color:#ececec;font-weight:400;">0</div>
<div class="t" style="left:966px;top:724.0px;width:200px;text-align:right;font-size:10px;font-weight:700;color:#ececec">Number of paths:</div>
<div class="t" style="left:1171.3px;top:724.0px;font-size:10.3px;color:#ececec;font-weight:400;">0</div>
<div class="a" style="left:1064.2px;top:756.4px;width:71.7px;height:22.2px;background:#2c2c2c;border-radius:3px;box-shadow:0 1px 1px rgba(0,0,0,.4)"></div>
<div class="a" style="left:1206.2px;top:757px;width:69.8px;height:21.6px;background:#2c2c2c;border-radius:3px;box-shadow:0 1px 1px rgba(0,0,0,.4)"></div>
<div class="t" style="left:1088.5px;top:762.2px;font-size:10.2px;color:#ececec;font-weight:400;">Help</div>
<div class="t" style="left:1227.6px;top:762.2px;font-size:10.2px;color:#ececec;font-weight:400;">Close</div>
</body></html>
